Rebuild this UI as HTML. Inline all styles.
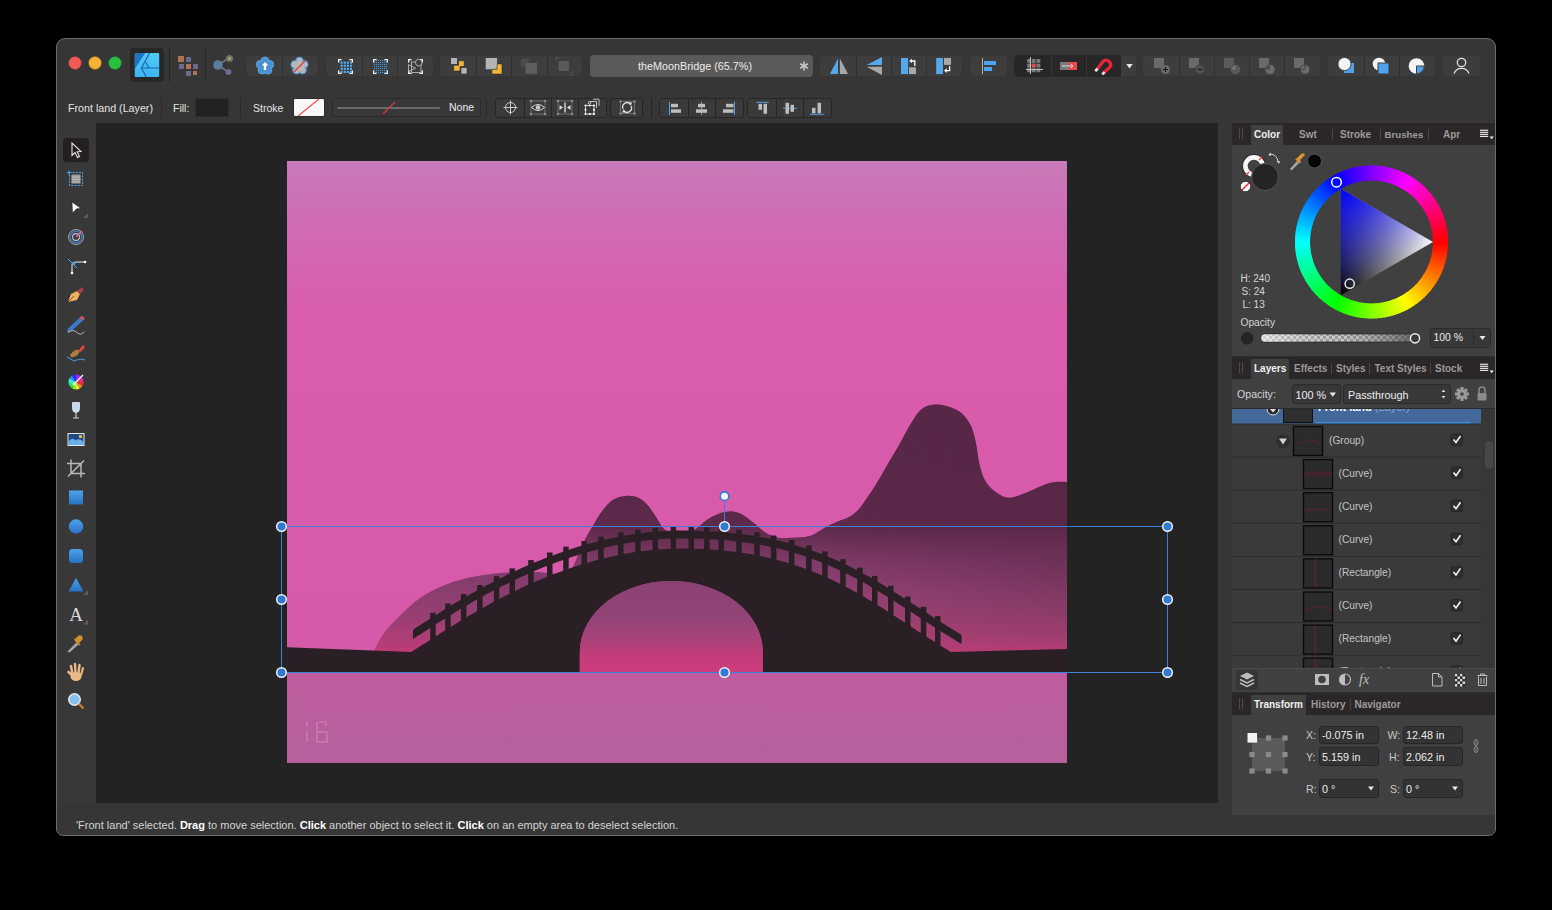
<!DOCTYPE html><html><head><meta charset="utf-8"><style>
*{margin:0;padding:0;box-sizing:border-box}
html,body{width:1552px;height:910px;overflow:hidden;background:#000;font-family:"Liberation Sans",sans-serif;position:relative}
.a{position:absolute}
svg.a{overflow:visible}
.t{position:absolute;white-space:nowrap}
</style></head><body><div class="a" style="left:56px;top:38px;width:1440px;height:798px;background:#363636;border:1px solid #6c6c6c;border-radius:9px 9px 7px 7px"></div><div class="a" style="left:57px;top:120px;width:39px;height:683px;background:#383838;"></div><div class="a" style="left:96px;top:123px;width:1122px;height:680px;background:#232323;"></div><div class="a" style="left:1232px;top:123px;width:263px;height:692px;background:#3f3f3f;"></div><div class="a" style="left:130px;top:48px;width:34px;height:34px;background:#272727;border-radius:4px"></div><svg class="a" style="left:130px;top:48px;" width="34" height="34" viewBox="130 48 34 34"><defs><linearGradient id="lg1" x1="0" y1="0" x2="0" y2="1"><stop offset="0" stop-color="#52c9f6"/><stop offset="1" stop-color="#3cb6f0"/></linearGradient></defs>
<rect x="134.8" y="52.9" width="24.4" height="24.2" rx="1.2" fill="url(#lg1)"/>
<path d="M134.8 54 Q134.8 52.9 136 52.9 L145.2 52.9 L134.8 68.9 Z" fill="#1f74c4"/>
<path d="M149.6 52.9 L141.4 68 L146.4 77.1 M141.4 68 H159.2 M145.6 62 L148.9 68" stroke="#1a64b4" stroke-width="1.15" fill="none"/>
</svg><div class="a" style="left:169px;top:48px;width:1px;height:34px;background:#242424;"></div><div class="a" style="left:205px;top:48px;width:1px;height:34px;background:#242424;"></div><svg class="a" style="left:175px;top:52px;" width="25" height="28" viewBox="175 52 25 28"><rect x="178" y="56" width="6" height="6" fill="#b07550"/><rect x="186" y="57" width="5" height="5" fill="#6a6a8e"/>
<rect x="179" y="64" width="5" height="5" fill="#6a6a8e"/><rect x="186" y="64" width="5" height="5" fill="#b07550"/><rect x="193" y="64" width="5" height="5" fill="#6a6a8e"/>
<rect x="186" y="71" width="5" height="5" fill="#6a6a8e"/><rect x="193" y="71" width="4" height="4" fill="#b07550"/></svg><svg class="a" style="left:210px;top:52px;" width="26" height="28" viewBox="210 52 26 28"><line x1="218" y1="65" x2="229" y2="58" stroke="#8a8a8a" stroke-width="1.2"/><line x1="218" y1="65" x2="228" y2="72" stroke="#8a8a8a" stroke-width="1.2"/>
<circle cx="218" cy="65" r="4.8" fill="#5a7f9e"/><circle cx="229.5" cy="58.5" r="3.6" fill="#707070"/><circle cx="228.5" cy="72" r="3" fill="#6b6b99"/>
<circle cx="229.5" cy="58.5" r="1.6" fill="#9ab04a"/></svg><div class="a" style="left:245px;top:55px;width:74px;height:22px;background:#3d3d3d;border-radius:5px;box-shadow:inset 0 0 0 1px rgba(40,40,40,.35)"></div><div class="a" style="left:282px;top:55px;width:1px;height:22px;background:#303030;"></div><div class="a" style="left:325px;top:55px;width:109px;height:22px;background:#3d3d3d;border-radius:5px;box-shadow:inset 0 0 0 1px rgba(40,40,40,.35)"></div><div class="a" style="left:362px;top:55px;width:1px;height:22px;background:#303030;"></div><div class="a" style="left:397px;top:55px;width:1px;height:22px;background:#303030;"></div><div class="a" style="left:439px;top:55px;width:144px;height:22px;background:#3d3d3d;border-radius:5px;box-shadow:inset 0 0 0 1px rgba(40,40,40,.35)"></div><div class="a" style="left:476px;top:55px;width:1px;height:22px;background:#303030;"></div><div class="a" style="left:511px;top:55px;width:1px;height:22px;background:#303030;"></div><div class="a" style="left:547px;top:55px;width:1px;height:22px;background:#303030;"></div><div class="a" style="left:590px;top:55px;width:223px;height:22px;background:#5a5a5a;border-radius:4px"></div><div class="t" style="left:638px;top:60.86px;font-size:10.8px;line-height:10.8px;color:#ececec;font-weight:normal;">theMoonBridge (65.7%)</div><svg class="a" style="left:796px;top:58px;" width="16" height="16" viewBox="796 58 16 16"><g stroke="#c4c4c4" stroke-width="1.6"><line x1="804" y1="61.5" x2="804" y2="70.5"/><line x1="800.1" y1="63.75" x2="807.9" y2="68.25"/><line x1="800.1" y1="68.25" x2="807.9" y2="63.75"/></g></svg><div class="a" style="left:819px;top:55px;width:144px;height:22px;background:#3d3d3d;border-radius:5px;box-shadow:inset 0 0 0 1px rgba(40,40,40,.35)"></div><div class="a" style="left:856px;top:55px;width:1px;height:22px;background:#303030;"></div><div class="a" style="left:891px;top:55px;width:1px;height:22px;background:#303030;"></div><div class="a" style="left:926px;top:55px;width:1px;height:22px;background:#303030;"></div><div class="a" style="left:969px;top:55px;width:39px;height:22px;background:#3d3d3d;border-radius:5px;box-shadow:inset 0 0 0 1px rgba(40,40,40,.35)"></div><div class="a" style="left:1014px;top:55px;width:123px;height:22px;background:#3d3d3d;border-radius:5px;box-shadow:inset 0 0 0 1px rgba(40,40,40,.35)"></div><div class="a" style="left:1014px;top:55px;width:107px;height:22px;background:#272727;border-radius:5px 0 0 5px"></div><div class="a" style="left:1051px;top:55px;width:1px;height:22px;background:#363636;"></div><div class="a" style="left:1086px;top:55px;width:1px;height:22px;background:#363636;"></div><div class="a" style="left:1142px;top:55px;width:179px;height:22px;background:#3d3d3d;border-radius:5px;box-shadow:inset 0 0 0 1px rgba(40,40,40,.35)"></div><div class="a" style="left:1179px;top:55px;width:1px;height:22px;background:#303030;"></div><div class="a" style="left:1214px;top:55px;width:1px;height:22px;background:#303030;"></div><div class="a" style="left:1249px;top:55px;width:1px;height:22px;background:#303030;"></div><div class="a" style="left:1284px;top:55px;width:1px;height:22px;background:#303030;"></div><div class="a" style="left:1327px;top:55px;width:109px;height:22px;background:#3d3d3d;border-radius:5px;box-shadow:inset 0 0 0 1px rgba(40,40,40,.35)"></div><div class="a" style="left:1364px;top:55px;width:1px;height:22px;background:#303030;"></div><div class="a" style="left:1399px;top:55px;width:1px;height:22px;background:#303030;"></div><div class="a" style="left:1442px;top:55px;width:39px;height:22px;background:#3d3d3d;border-radius:5px;box-shadow:inset 0 0 0 1px rgba(40,40,40,.35)"></div><svg class="a" style="left:0px;top:0px;" width="1552" height="100" viewBox="0 0 1552 100"><circle cx="265.00" cy="61.05" r="3.96" fill="#4a90d0" stroke="#5aa5e8" stroke-width="1"/><circle cx="269.71" cy="64.47" r="3.96" fill="#4a90d0" stroke="#5aa5e8" stroke-width="1"/><circle cx="267.91" cy="70.00" r="3.96" fill="#4a90d0" stroke="#5aa5e8" stroke-width="1"/><circle cx="262.09" cy="70.00" r="3.96" fill="#4a90d0" stroke="#5aa5e8" stroke-width="1"/><circle cx="260.29" cy="64.47" r="3.96" fill="#4a90d0" stroke="#5aa5e8" stroke-width="1"/><circle cx="265" cy="66" r="5.3999999999999995" fill="#4a90d0"/><path d="M265 62 l-3.2 3.6 h2 v4.4 h2.4 v-4.4 h2 z" fill="#fff"/><circle cx="299.50" cy="61.05" r="3.96" fill="#b8b8b8" stroke="#3d8ad6" stroke-width="1"/><circle cx="304.21" cy="64.47" r="3.96" fill="#b8b8b8" stroke="#3d8ad6" stroke-width="1"/><circle cx="302.41" cy="70.00" r="3.96" fill="#b8b8b8" stroke="#3d8ad6" stroke-width="1"/><circle cx="296.59" cy="70.00" r="3.96" fill="#b8b8b8" stroke="#3d8ad6" stroke-width="1"/><circle cx="294.79" cy="64.47" r="3.96" fill="#b8b8b8" stroke="#3d8ad6" stroke-width="1"/><circle cx="299.5" cy="66" r="5.3999999999999995" fill="#b8b8b8"/><line x1="294" y1="72" x2="305" y2="61" stroke="#e83a3a" stroke-width="1.3"/><rect x="338.0" y="59.0" width="3.6" height="1.3" fill="#f0f0f0"/><rect x="338.0" y="59.0" width="1.3" height="3.6" fill="#f0f0f0"/><rect x="338.0" y="72.7" width="3.6" height="1.3" fill="#f0f0f0"/><rect x="338.0" y="70.4" width="1.3" height="3.6" fill="#f0f0f0"/><rect x="349.4" y="59.0" width="3.6" height="1.3" fill="#f0f0f0"/><rect x="351.7" y="59.0" width="1.3" height="3.6" fill="#f0f0f0"/><rect x="349.4" y="72.7" width="3.6" height="1.3" fill="#f0f0f0"/><rect x="351.7" y="70.4" width="1.3" height="3.6" fill="#f0f0f0"/><rect x="340.6" y="61.6" width="2.1" height="2.1" fill="#55b0f5"/><rect x="340.6" y="64.7" width="2.1" height="2.1" fill="#55b0f5"/><rect x="340.6" y="67.8" width="2.1" height="2.1" fill="#55b0f5"/><rect x="340.6" y="70.9" width="2.1" height="2.1" fill="#55b0f5"/><rect x="343.7" y="61.6" width="2.1" height="2.1" fill="#55b0f5"/><rect x="343.7" y="64.7" width="2.1" height="2.1" fill="#55b0f5"/><rect x="343.7" y="67.8" width="2.1" height="2.1" fill="#55b0f5"/><rect x="343.7" y="70.9" width="2.1" height="2.1" fill="#55b0f5"/><rect x="346.8" y="61.6" width="2.1" height="2.1" fill="#55b0f5"/><rect x="346.8" y="64.7" width="2.1" height="2.1" fill="#55b0f5"/><rect x="346.8" y="67.8" width="2.1" height="2.1" fill="#55b0f5"/><rect x="346.8" y="70.9" width="2.1" height="2.1" fill="#55b0f5"/><rect x="349.9" y="61.6" width="2.1" height="2.1" fill="#55b0f5"/><rect x="349.9" y="64.7" width="2.1" height="2.1" fill="#55b0f5"/><rect x="349.9" y="67.8" width="2.1" height="2.1" fill="#55b0f5"/><rect x="349.9" y="70.9" width="2.1" height="2.1" fill="#55b0f5"/><rect x="373.0" y="59.0" width="3.6" height="1.3" fill="#f0f0f0"/><rect x="373.0" y="59.0" width="1.3" height="3.6" fill="#f0f0f0"/><rect x="373.0" y="72.7" width="3.6" height="1.3" fill="#f0f0f0"/><rect x="373.0" y="70.4" width="1.3" height="3.6" fill="#f0f0f0"/><rect x="384.4" y="59.0" width="3.6" height="1.3" fill="#f0f0f0"/><rect x="386.7" y="59.0" width="1.3" height="3.6" fill="#f0f0f0"/><rect x="384.4" y="72.7" width="3.6" height="1.3" fill="#f0f0f0"/><rect x="386.7" y="70.4" width="1.3" height="3.6" fill="#f0f0f0"/><rect x="374" y="60" width="1.1" height="1.1" fill="#4a98dc"/><rect x="374" y="62" width="1.1" height="1.1" fill="#4a98dc"/><rect x="374" y="64" width="1.1" height="1.1" fill="#4a98dc"/><rect x="374" y="66" width="1.1" height="1.1" fill="#4a98dc"/><rect x="374" y="68" width="1.1" height="1.1" fill="#4a98dc"/><rect x="374" y="70" width="1.1" height="1.1" fill="#4a98dc"/><rect x="374" y="72" width="1.1" height="1.1" fill="#4a98dc"/><rect x="376" y="60" width="1.1" height="1.1" fill="#4a98dc"/><rect x="376" y="62" width="1.1" height="1.1" fill="#4a98dc"/><rect x="376" y="64" width="1.1" height="1.1" fill="#4a98dc"/><rect x="376" y="66" width="1.1" height="1.1" fill="#4a98dc"/><rect x="376" y="68" width="1.1" height="1.1" fill="#4a98dc"/><rect x="376" y="70" width="1.1" height="1.1" fill="#4a98dc"/><rect x="376" y="72" width="1.1" height="1.1" fill="#4a98dc"/><rect x="378" y="60" width="1.1" height="1.1" fill="#4a98dc"/><rect x="378" y="62" width="1.1" height="1.1" fill="#4a98dc"/><rect x="378" y="64" width="1.1" height="1.1" fill="#4a98dc"/><rect x="378" y="66" width="1.1" height="1.1" fill="#4a98dc"/><rect x="378" y="68" width="1.1" height="1.1" fill="#4a98dc"/><rect x="378" y="70" width="1.1" height="1.1" fill="#4a98dc"/><rect x="378" y="72" width="1.1" height="1.1" fill="#4a98dc"/><rect x="380" y="60" width="1.1" height="1.1" fill="#4a98dc"/><rect x="380" y="62" width="1.1" height="1.1" fill="#4a98dc"/><rect x="380" y="64" width="1.1" height="1.1" fill="#4a98dc"/><rect x="380" y="66" width="1.1" height="1.1" fill="#4a98dc"/><rect x="380" y="68" width="1.1" height="1.1" fill="#4a98dc"/><rect x="380" y="70" width="1.1" height="1.1" fill="#4a98dc"/><rect x="380" y="72" width="1.1" height="1.1" fill="#4a98dc"/><rect x="382" y="60" width="1.1" height="1.1" fill="#4a98dc"/><rect x="382" y="62" width="1.1" height="1.1" fill="#4a98dc"/><rect x="382" y="64" width="1.1" height="1.1" fill="#4a98dc"/><rect x="382" y="66" width="1.1" height="1.1" fill="#4a98dc"/><rect x="382" y="68" width="1.1" height="1.1" fill="#4a98dc"/><rect x="382" y="70" width="1.1" height="1.1" fill="#4a98dc"/><rect x="382" y="72" width="1.1" height="1.1" fill="#4a98dc"/><rect x="384" y="60" width="1.1" height="1.1" fill="#4a98dc"/><rect x="384" y="62" width="1.1" height="1.1" fill="#4a98dc"/><rect x="384" y="64" width="1.1" height="1.1" fill="#4a98dc"/><rect x="384" y="66" width="1.1" height="1.1" fill="#4a98dc"/><rect x="384" y="68" width="1.1" height="1.1" fill="#4a98dc"/><rect x="384" y="70" width="1.1" height="1.1" fill="#4a98dc"/><rect x="384" y="72" width="1.1" height="1.1" fill="#4a98dc"/><rect x="386" y="60" width="1.1" height="1.1" fill="#4a98dc"/><rect x="386" y="62" width="1.1" height="1.1" fill="#4a98dc"/><rect x="386" y="64" width="1.1" height="1.1" fill="#4a98dc"/><rect x="386" y="66" width="1.1" height="1.1" fill="#4a98dc"/><rect x="386" y="68" width="1.1" height="1.1" fill="#4a98dc"/><rect x="386" y="70" width="1.1" height="1.1" fill="#4a98dc"/><rect x="386" y="72" width="1.1" height="1.1" fill="#4a98dc"/><rect x="408.0" y="59.0" width="3.6" height="1.3" fill="#f0f0f0"/><rect x="408.0" y="59.0" width="1.3" height="3.6" fill="#f0f0f0"/><rect x="408.0" y="72.7" width="3.6" height="1.3" fill="#f0f0f0"/><rect x="408.0" y="70.4" width="1.3" height="3.6" fill="#f0f0f0"/><rect x="419.4" y="59.0" width="3.6" height="1.3" fill="#f0f0f0"/><rect x="421.7" y="59.0" width="1.3" height="3.6" fill="#f0f0f0"/><rect x="419.4" y="72.7" width="3.6" height="1.3" fill="#f0f0f0"/><rect x="421.7" y="70.4" width="1.3" height="3.6" fill="#f0f0f0"/><rect x="411.5" y="62" width="9.5" height="10.5" fill="none" stroke="#b8b8b8" stroke-width=".9"/><circle cx="418.7" cy="62.6" r="3.3" fill="#3d3d3d" stroke="#b8b8b8" stroke-width=".9"/><path d="M408.5 64.5 v7 M408.5 64.6 L415.6 68.2 L408.5 71.6" fill="none" stroke="#b8b8b8" stroke-width=".9"/><rect x="451" y="58" width="6" height="6" fill="#b4b4b4"/><path d="M458.5 60.8 h5.7 v5.8 h-4.2 v4.4 h-6.3 v-5.7 h4.8z" fill="#f2b43a" stroke="#2a2a2a" stroke-width=".6"/><rect x="461" y="67.7" width="6" height="6.3" fill="#b4b4b4" stroke="#2a2a2a" stroke-width=".5"/><rect x="485.7" y="58" width="11.4" height="11.3" fill="#b4b4b4"/><path d="M497.1 63.9 h4.9 v10.2 h-10.1 v-4.8 h5.2z" fill="#f2b43a" stroke="#2a2a2a" stroke-width=".6"/><rect x="521" y="58.7" width="8.5" height="8" fill="#4a4a4a"/><rect x="525.7" y="63" width="11.4" height="10.9" fill="#5e5e5e"/><path d="M556 61 v-3 h3" stroke="#4e4e4e" stroke-width="1.5" fill="none"/><rect x="558.6" y="61" width="10.5" height="10" fill="#5a5a5a"/><path d="M572 72 v3 h-3" stroke="#4e4e4e" stroke-width="1.5" fill="none"/><path d="M838 58.5 v15.4 h-8.1 z" fill="#55a8ec"/><path d="M839.9 58.5 v15.4 h8.1 z" fill="#a8a8a8"/><path d="M882 57 v8 h-15.4 z" fill="#55a8ec"/><path d="M866.6 66.8 h15.4 v8.1 z" fill="#a8a8a8"/><rect x="901" y="58" width="7.1" height="16.1" fill="#55a8ec"/><rect x="909" y="67.3" width="7" height="6.8" fill="#a8a8a8"/><path d="M914.8 66 v-5 h-3.8" stroke="#fff" stroke-width="1.3" fill="none"/><path d="M909.3 61 l2.6 -2.3 v4.6z" fill="#fff"/><rect x="936.2" y="58" width="6.8" height="16.1" fill="#55a8ec"/><rect x="944" y="58" width="7" height="6.9" fill="#a8a8a8"/><path d="M949.6 66.3 v4.3 h-3.8" stroke="#fff" stroke-width="1.3" fill="none"/><path d="M944.1 70.6 l2.6 -2.3 v4.6z" fill="#fff"/><line x1="982.5" y1="58" x2="982.5" y2="74" stroke="#b0b0b0" stroke-width="1"/><rect x="984" y="61" width="12" height="4" fill="#4da3ee"/><rect x="984" y="67" width="8" height="4" fill="#4da3ee"/><rect x="1027.1" y="59.0" width="3.8" height="3.8" fill="#7a7a7a"/><rect x="1027.1" y="63.7" width="3.8" height="3.8" fill="#7a7a7a"/><rect x="1027.1" y="68.4" width="3.8" height="3.8" fill="#7a7a7a"/><rect x="1031.8" y="59.0" width="3.8" height="3.8" fill="#7a7a7a"/><rect x="1031.8" y="63.7" width="3.8" height="3.8" fill="#7a7a7a"/><rect x="1031.8" y="68.4" width="3.8" height="3.8" fill="#7a7a7a"/><rect x="1036.5" y="59.0" width="3.8" height="3.8" fill="#7a7a7a"/><rect x="1036.5" y="63.7" width="3.8" height="3.8" fill="#7a7a7a"/><rect x="1036.5" y="68.4" width="3.8" height="3.8" fill="#7a7a7a"/><rect x="1031.8" y="63.7" width="3.8" height="3.8" fill="#f04848"/><line x1="1030.5" y1="57" x2="1030.5" y2="74" stroke="#d0d0d0" stroke-width=".9"/><line x1="1026" y1="69.5" x2="1043" y2="69.5" stroke="#d0d0d0" stroke-width=".9"/><rect x="1060" y="62" width="9" height="8" fill="#7a7a7a"/><rect x="1069" y="62" width="8" height="8" fill="#f04848"/><path d="M1062 66 h11 l-2 -2 M1073 66 l-2 2" stroke="#ddd" stroke-width="1" fill="none"/><path d="M1096.5 70 L1103 61.5 A4.5 4.5 0 0 1 1110 67 L1103.5 73" stroke="#e8243a" stroke-width="3.3" fill="none"/><path d="M1095.5 69 l1.8 1.8" stroke="#eee" stroke-width="3.3"/><path d="M1102.5 72.3 l1.8 1.8" stroke="#eee" stroke-width="3.3"/><path d="M1126.3 64 h6.4 l-3.2 4.6 z" fill="#e8e8e8"/><rect x="1154" y="58" width="10" height="10" fill="#6a6a6a"/><circle cx="1165.5" cy="69.5" r="4.5" fill="#6a6a6a"/><path d="M1163 69.5 h5 M1165.5 67 v5" stroke="#111" stroke-width="1.1"/><rect x="1189" y="58" width="10" height="10" fill="#6a6a6a"/><circle cx="1200" cy="69.5" r="4.6" fill="#525252" stroke="#3d3d3d" stroke-width="1"/><path d="M1197.5 69.5 h5" stroke="#111" stroke-width="1.1"/><rect x="1224" y="58" width="10" height="10" fill="#5a5a5a"/><circle cx="1235.5" cy="69.5" r="4.8" fill="#585858"/><path d="M1230.7 69.5 h4.8 v-4.8" fill="#777"/><rect x="1259" y="58" width="10" height="10" fill="#6a6a6a"/><circle cx="1270" cy="69.5" r="4.8" fill="#6a6a6a"/><path d="M1265.2 69.5 a4.8 4.8 0 0 1 4.8 -4.8 v4.8z" fill="#4a4a4a"/><rect x="1294" y="58" width="10" height="10" fill="#6a6a6a"/><circle cx="1305" cy="69.5" r="4.8" fill="#6a6a6a" stroke="#3d3d3d" stroke-width=".8"/><path d="M1300.2 69.5 h4.8 v-4.8" stroke="#3d3d3d" stroke-width=".8" fill="none"/><rect x="1344" y="63" width="10" height="10" fill="#4da3ee"/><circle cx="1344.5" cy="64" r="6.6" fill="#f4f4f4" stroke="#3d3d3d" stroke-width="1"/><circle cx="1379" cy="64" r="6.3" fill="#f4f4f4"/><rect x="1378" y="63" width="11" height="11" fill="#4da3ee" stroke="#3d3d3d" stroke-width="1"/><circle cx="1416.5" cy="66" r="7.8" fill="#f4f4f4"/><path d="M1416.5 66 h7.8 a7.8 7.8 0 0 1 -7.8 7.8z" fill="#4da3ee" stroke="#3d3d3d" stroke-width="1"/><circle cx="1461.5" cy="62.5" r="4.2" fill="none" stroke="#e0e0e0" stroke-width="1.3"/><path d="M1454 73.5 a8 8 0 0 1 15 0" fill="none" stroke="#e0e0e0" stroke-width="1.3"/></svg><svg class="a" style="left:60px;top:50px;" width="70" height="30" viewBox="60 50 70 30"><circle cx="75" cy="63" r="6.2" fill="#f25a55" stroke="#d8443f" stroke-width=".6"/><circle cx="95" cy="63" r="6.2" fill="#f4b234" stroke="#d89a2a" stroke-width=".6"/><circle cx="115" cy="63" r="6.2" fill="#27c140" stroke="#20a838" stroke-width=".6"/></svg><div class="t" style="left:68px;top:102.94px;font-size:10.7px;line-height:10.7px;color:#e4e4e4;font-weight:normal;">Front land (Layer)</div><div class="a" style="left:161px;top:98px;width:1px;height:20px;background:#2a2a2a;"></div><div class="t" style="left:173px;top:103.11px;font-size:10.5px;line-height:10.5px;color:#e4e4e4;font-weight:normal;">Fill:</div><div class="a" style="left:195px;top:98px;width:34px;height:19px;background:#222222;border:1px solid #2c2c2c;border-radius:2px"></div><div class="a" style="left:240px;top:98px;width:1px;height:20px;background:#2a2a2a;"></div><div class="t" style="left:253px;top:103.11px;font-size:10.5px;line-height:10.5px;color:#e4e4e4;font-weight:normal;">Stroke</div><div class="a" style="left:293px;top:98px;width:32px;height:19px;background:#f8f8f8;border:1px solid #2a2a2a;border-radius:2px"></div><svg class="a" style="left:293px;top:98px;" width="32" height="19" viewBox="293 98 32 19"><line x1="298" y1="116" x2="319" y2="99" stroke="#ef5050" stroke-width="1.2"/></svg><div class="a" style="left:332px;top:98px;width:149px;height:19px;background:#383838;border:1px solid #2a2a2a;border-radius:3px"></div><div class="a" style="left:337px;top:107px;width:103px;height:2px;background:#6a6a6a;border-radius:1px"></div><svg class="a" style="left:330px;top:96px;" width="152" height="24" viewBox="330 96 152 24"><line x1="383" y1="114" x2="395" y2="102" stroke="#d83a3a" stroke-width="1.3"/></svg><div class="t" style="left:449px;top:102.11px;font-size:10.5px;line-height:10.5px;color:#ececec;font-weight:normal;">None</div><div class="a" style="left:486px;top:98px;width:1px;height:20px;background:#2a2a2a;"></div><div class="a" style="left:495px;top:98px;width:112px;height:20px;background:#3a3a3a;border:1px solid #262626;border-radius:3px"></div><div class="a" style="left:524px;top:99px;width:1px;height:18px;background:#262626;"></div><div class="a" style="left:551px;top:99px;width:1px;height:18px;background:#262626;"></div><div class="a" style="left:578px;top:99px;width:1px;height:18px;background:#262626;"></div><div class="a" style="left:610px;top:98px;width:33px;height:20px;background:#3a3a3a;border:1px solid #262626;border-radius:3px"></div><div class="a" style="left:651px;top:98px;width:1px;height:20px;background:#262626;"></div><div class="a" style="left:659px;top:98px;width:85px;height:20px;background:#3a3a3a;border:1px solid #262626;border-radius:3px"></div><div class="a" style="left:688px;top:99px;width:1px;height:18px;background:#262626;"></div><div class="a" style="left:715px;top:99px;width:1px;height:18px;background:#262626;"></div><div class="a" style="left:747px;top:98px;width:85px;height:20px;background:#3a3a3a;border:1px solid #262626;border-radius:3px"></div><div class="a" style="left:776px;top:99px;width:1px;height:18px;background:#262626;"></div><div class="a" style="left:803px;top:99px;width:1px;height:18px;background:#262626;"></div><svg class="a" style="left:480px;top:90px;" width="360" height="35" viewBox="480 90 360 35"><circle cx="510.5" cy="107.5" r="5" fill="none" stroke="#d8d8d8" stroke-width=".9"/><path d="M503.5 107.5 h14 M510.5 100.5 v14" stroke="#d8d8d8" stroke-width=".9"/><rect x="531" y="101" width="14" height="13" fill="none" stroke="#7a7a7a" stroke-width=".8"/><circle cx="531" cy="101" r="1.3" fill="#8a8a8a"/><circle cx="531" cy="114" r="1.3" fill="#8a8a8a"/><circle cx="545" cy="101" r="1.3" fill="#8a8a8a"/><circle cx="545" cy="114" r="1.3" fill="#8a8a8a"/><path d="M531.5 107.5 q6.5 -6 13 0 q-6.5 6 -13 0z" fill="none" stroke="#e0e0e0" stroke-width="1"/><circle cx="538" cy="107.5" r="2.3" fill="#c8c8c8"/><rect x="558" y="101" width="14" height="13" fill="none" stroke="#7a7a7a" stroke-width=".8"/><circle cx="558" cy="101" r="1.3" fill="#8a8a8a"/><circle cx="558" cy="114" r="1.3" fill="#8a8a8a"/><circle cx="572" cy="101" r="1.3" fill="#8a8a8a"/><circle cx="572" cy="114" r="1.3" fill="#8a8a8a"/><path d="M565 102.5 v10" stroke="#a8a8a8" stroke-width="2.2"/><path d="M559.5 105 l3.5 2.5 l-3.5 2.5z M570.5 105 l-3.5 2.5 l3.5 2.5z" fill="#e0e0e0"/><path d="M590 101.5 h6.5 v6.5 M593 99.2 h6 v6.5" fill="none" stroke="#cfcfcf" stroke-width=".9"/><rect x="585.5" y="105.5" width="8.5" height="8.5" fill="none" stroke="#f0f0f0" stroke-width=".8"/><circle cx="585.5" cy="105.5" r="1.05" fill="#fff"/><circle cx="585.5" cy="109.75" r="1.05" fill="#fff"/><circle cx="585.5" cy="114" r="1.05" fill="#fff"/><circle cx="589.75" cy="105.5" r="1.05" fill="#fff"/><circle cx="589.75" cy="114" r="1.05" fill="#fff"/><circle cx="594" cy="105.5" r="1.05" fill="#fff"/><circle cx="594" cy="109.75" r="1.05" fill="#fff"/><circle cx="594" cy="114" r="1.05" fill="#fff"/><circle cx="589.5" cy="102.8" r="1.3" fill="#3a3a3a" stroke="#fff" stroke-width=".7"/><rect x="620.5" y="101.5" width="14.0" height="12.0" fill="none" stroke="#7a7a7a" stroke-width=".8"/><circle cx="620.5" cy="101.5" r="1.3" fill="#8a8a8a"/><circle cx="620.5" cy="113.5" r="1.3" fill="#8a8a8a"/><circle cx="634.5" cy="101.5" r="1.3" fill="#8a8a8a"/><circle cx="634.5" cy="113.5" r="1.3" fill="#8a8a8a"/><path d="M623.2 109 A4.3 4.3 0 0 1 630.5 104.5" fill="none" stroke="#dcdcdc" stroke-width="1.3"/><path d="M631 106 A4.3 4.3 0 0 1 623.7 110.5" fill="none" stroke="#dcdcdc" stroke-width="1.3"/><path d="M628.5 102.6 l3.6 -0.2 l-1.2 3.4z M625.8 112.4 l-3.6 0.2 l1.2 -3.4z" fill="#dcdcdc"/><g transform="translate(0,0.8)"><line x1="669.5" y1="101" x2="669.5" y2="114" stroke="#4da3ee" stroke-width="1"/><rect x="671" y="103" width="7" height="3.5" fill="#bdbdbd"/><rect x="671" y="108.5" width="10" height="3.5" fill="#bdbdbd"/><line x1="701.5" y1="101" x2="701.5" y2="114" stroke="#4da3ee" stroke-width="1"/><rect x="698" y="103" width="7" height="3.5" fill="#bdbdbd"/><rect x="696" y="108.5" width="11" height="3.5" fill="#bdbdbd"/><line x1="734.5" y1="101" x2="734.5" y2="114" stroke="#4da3ee" stroke-width="1"/><rect x="726" y="103" width="7.5" height="3.5" fill="#bdbdbd"/><rect x="723" y="108.5" width="10.5" height="3.5" fill="#bdbdbd"/><line x1="756" y1="101.5" x2="769" y2="101.5" stroke="#4da3ee" stroke-width="1"/><rect x="758.5" y="103" width="3.5" height="6" fill="#bdbdbd"/><rect x="763.5" y="103" width="3.5" height="10" fill="#bdbdbd"/><line x1="783" y1="107.5" x2="797" y2="107.5" stroke="#4da3ee" stroke-width="1"/><rect x="785.5" y="102" width="3.5" height="11" fill="#bdbdbd"/><rect x="790.5" y="104" width="3.5" height="7" fill="#bdbdbd"/><line x1="810" y1="113.5" x2="824" y2="113.5" stroke="#4da3ee" stroke-width="1"/><rect x="812" y="107" width="3.5" height="5.5" fill="#bdbdbd"/><rect x="817.5" y="102" width="3.5" height="10.5" fill="#bdbdbd"/></g></svg><div class="a" style="left:63px;top:138px;width:26px;height:24px;background:#241f21;border-radius:4px"></div><svg class="a" style="left:56px;top:120px;" width="40" height="600" viewBox="56 120 40 600"><path d="M72 143 L72 155.5 L75 152.5 L77.5 157.5 L79.5 156.5 L77.2 151.8 L81 151.6 Z" fill="#1e1a1c" stroke="#e6e6e6" stroke-width="1.1"/><path d="M67 172.5 h4 M69 170.5 v4" stroke="#4da3ee" stroke-width="1"/><rect x="69.5" y="172.5" width="13" height="13" fill="none" stroke="#4da3ee" stroke-width="1" stroke-dasharray="2 1.2"/><rect x="71.5" y="174.5" width="9" height="9" fill="#9a9a9a"/><line x1="71.5" y1="177.0" x2="80.5" y2="177.0" stroke="#cfcfcf" stroke-width=".6"/><line x1="71.5" y1="179.5" x2="80.5" y2="179.5" stroke="#cfcfcf" stroke-width=".6"/><line x1="71.5" y1="182.0" x2="80.5" y2="182.0" stroke="#cfcfcf" stroke-width=".6"/><path d="M72 202 L81 208.5 L76.5 208.8 L72.5 213 Z" fill="#ffffff" stroke="#111" stroke-width=".5"/><path d="M88 213 v5 h-5z" fill="#5a5a5a"/><circle cx="76" cy="237" r="7.5" fill="#3a3a3a" stroke="#a8a8a8" stroke-width="1"/><circle cx="76" cy="237" r="5.8" fill="none" stroke="#3a78c8" stroke-width="1.4"/><circle cx="76" cy="237" r="3.4" fill="none" stroke="#c8c8c8" stroke-width="1.1"/><line x1="76" y1="237" x2="82" y2="231" stroke="#e060b0" stroke-width="1.5"/><path d="M72 273 V265 Q72 262 77 262 H85" fill="none" stroke="#f0f0f0" stroke-width="1"/><line x1="68" y1="259" x2="77" y2="268" stroke="#4da3ee" stroke-width="1"/><circle cx="73.5" cy="263.5" r="1.8" fill="#4da3ee"/><circle cx="72" cy="273" r="1.3" fill="#fff"/><circle cx="85" cy="262" r="1.3" fill="#fff"/><path d="M68 302 L71 294 L77 291 L80 294 L77 300 Z" fill="#f0b060"/><path d="M77 291 L82 287 L84 290 L80 294 Z" fill="#a04040"/><line x1="68" y1="302" x2="74" y2="296" stroke="#5a3a20" stroke-width=".8"/><path d="M68 328.5 L81 316.5 L84 319.5 L71 331.5 L67 332.5 Z" fill="#3a78c8"/><path d="M81 316.5 L84 319.5" stroke="#e05050" stroke-width="2.5"/><path d="M68 332.5 q5 -4 9 0 t7 -1" fill="none" stroke="#cfcfcf" stroke-width=".8"/><path d="M79 350 L83 345 L85 347 L81 352Z" fill="#e04848"/><path d="M70 355 Q76 347 80 351 Q77 358 71 357Z" fill="#b07a40"/><path d="M67 357 L74 361 Q80 358 85 360" fill="none" stroke="#4a90d0" stroke-width="1.1"/><path d="M76 382 L83.50 382.00 A7.5 7.5 0 0 1 82.50 385.75Z" fill="hsl(0,85%,55%)"/><path d="M76 382 L82.50 385.75 A7.5 7.5 0 0 1 79.75 388.50Z" fill="hsl(30,85%,55%)"/><path d="M76 382 L79.75 388.50 A7.5 7.5 0 0 1 76.00 389.50Z" fill="hsl(60,85%,55%)"/><path d="M76 382 L76.00 389.50 A7.5 7.5 0 0 1 72.25 388.50Z" fill="hsl(90,85%,55%)"/><path d="M76 382 L72.25 388.50 A7.5 7.5 0 0 1 69.50 385.75Z" fill="hsl(120,85%,55%)"/><path d="M76 382 L69.50 385.75 A7.5 7.5 0 0 1 68.50 382.00Z" fill="hsl(150,85%,55%)"/><path d="M76 382 L68.50 382.00 A7.5 7.5 0 0 1 69.50 378.25Z" fill="hsl(180,85%,55%)"/><path d="M76 382 L69.50 378.25 A7.5 7.5 0 0 1 72.25 375.50Z" fill="hsl(210,85%,55%)"/><path d="M76 382 L72.25 375.50 A7.5 7.5 0 0 1 76.00 374.50Z" fill="hsl(240,85%,55%)"/><path d="M76 382 L76.00 374.50 A7.5 7.5 0 0 1 79.75 375.50Z" fill="hsl(270,85%,55%)"/><path d="M76 382 L79.75 375.50 A7.5 7.5 0 0 1 82.50 378.25Z" fill="hsl(300,85%,55%)"/><path d="M76 382 L82.50 378.25 A7.5 7.5 0 0 1 83.50 382.00Z" fill="hsl(330,85%,55%)"/><line x1="74" y1="384" x2="83" y2="375" stroke="#fff" stroke-width="1.3"/><circle cx="74" cy="384" r="1.5" fill="#fff"/><path d="M72.5 402.5 h7 v6 q0 4 -3.5 4 q-3.5 0 -3.5 -4z" fill="#c8d8f0" stroke="#e8e8e8" stroke-width=".8"/><path d="M76 412.5 v5 M73 418.0 h6" stroke="#cfcfcf" stroke-width="1.2"/><rect x="67.5" y="433.0" width="17" height="13" fill="#e8e8e8"/><rect x="68.5" y="434.0" width="15" height="11" fill="#1e4a8a"/><path d="M68.5 441.5 q4 -5 7 -1 q3 -3 8 1 v3.5 h-15z" fill="#6ab0e8"/><rect x="79" y="435.0" width="3" height="3" fill="#f0b030"/><path d="M71 459.5 V473.5 H85 M67 463.5 H81 V477.5 M68 476.5 L84 460.5" fill="none" stroke="#b8b8b8" stroke-width="1.5"/><defs><linearGradient id="tg" x1="0" y1="0" x2="0" y2="1"><stop offset="0" stop-color="#4aa2ea"/><stop offset="1" stop-color="#2a72c4"/></linearGradient></defs><rect x="69" y="490.5" width="14" height="14" fill="url(#tg)"/><circle cx="76" cy="526.5" r="7.2" fill="url(#tg)"/><rect x="69" y="549" width="14" height="14" rx="3.5" fill="url(#tg)"/><path d="M76 578 L83.5 591.5 H68.5Z" fill="url(#tg)"/><path d="M88 590 v5 h-5z" fill="#5a5a5a"/><text x="76" y="621.0" text-anchor="middle" font-family="Liberation Serif" font-size="19" fill="#d8d8d8">A</text><path d="M88 619.5 v5 h-5z" fill="#5a5a5a"/><path d="M67.5 651.5 L76.5 642.5 L78.5 644.5 L69.5 652.5Z" fill="#a8a8a8"/><path d="M75 641 L79.5 645.5 L80.5 644.5 L79 643 L82.5 639.5 A3 3 0 0 0 78.5 635.5 L75 639 L73.5 637.5Z" fill="#d0902c"/><g stroke="#e8b888" stroke-linecap="round" fill="none"><path d="M68.5 672 L73 676" stroke-width="2.6"/><path d="M72.5 674 L71 666" stroke-width="2.4"/><path d="M75.5 673 L75 664" stroke-width="2.4"/><path d="M78.5 673 L79.5 665" stroke-width="2.4"/><path d="M81 675 L83 668" stroke-width="2.2"/></g><ellipse cx="76" cy="676.5" rx="5.5" ry="4.5" fill="#e8b888"/><circle cx="74.5" cy="699.5" r="5.8" fill="#8ac0f0" stroke="#e8e8e8" stroke-width="1.4"/><line x1="79" y1="704" x2="83.5" y2="708.5" stroke="#d07a30" stroke-width="2.4"/></svg><svg class="a" style="left:96px;top:123px;" width="1122" height="680" viewBox="96 123 1122 680"><defs>
<linearGradient id="sky" x1="0" y1="161" x2="0" y2="763" gradientUnits="userSpaceOnUse">
<stop offset="0" stop-color="#c87ab9"/><stop offset="0.1" stop-color="#d06cb4"/><stop offset="0.25" stop-color="#d95cad"/><stop offset="0.8" stop-color="#d75aaa"/>
<stop offset="0.85" stop-color="#bf5c9f"/><stop offset="1" stop-color="#b5609c"/></linearGradient>
<linearGradient id="mtn" x1="0" y1="405" x2="0" y2="660" gradientUnits="userSpaceOnUse">
<stop offset="0" stop-color="#552545"/><stop offset="0.47" stop-color="#5c2849"/><stop offset="0.6" stop-color="#6c3158"/><stop offset="0.76" stop-color="#823a65"/><stop offset="0.9" stop-color="#9e3e6e"/><stop offset="1" stop-color="#c23c76"/></linearGradient>
<linearGradient id="hill" x1="0" y1="570" x2="0" y2="655" gradientUnits="userSpaceOnUse">
<stop offset="0" stop-color="#7e3c6a"/><stop offset="0.5" stop-color="#953f72"/><stop offset="0.8" stop-color="#ad3e76"/><stop offset="1" stop-color="#c43a78"/></linearGradient>
<linearGradient id="arch" x1="0" y1="580" x2="0" y2="672" gradientUnits="userSpaceOnUse">
<stop offset="0" stop-color="#8a4272"/><stop offset="0.4" stop-color="#924476"/><stop offset="0.62" stop-color="#a6427a"/><stop offset="0.82" stop-color="#c23d7a"/><stop offset="1" stop-color="#cf3c7c"/></linearGradient>
<clipPath id="abclip"><rect x="287" y="161" width="780" height="602"/></clipPath>
</defs>
<g clip-path="url(#abclip)">
<rect x="287" y="161" width="780" height="602" fill="url(#sky)"/>
<path d="M373.0 653.0 C374.8 649.7 379.7 639.0 384.0 633.0 C388.3 627.0 392.4 622.9 398.7 616.9 C405.0 610.9 412.9 602.6 421.9 596.8 C430.9 591.0 442.5 585.7 452.8 582.1 C463.1 578.5 473.4 576.8 483.7 575.1 C494.0 573.4 504.3 572.4 514.6 572.0 C524.9 571.6 534.7 571.8 545.6 572.8 C556.5 573.8 574.3 577.1 580.0 578.0 L580 660 L373 660 Z" fill="url(#hill)"/><path d="M572.0 570.0 C574.1 565.2 580.8 548.8 584.4 541.3 C588.0 533.8 590.5 530.2 593.5 525.1 C596.5 520.0 599.2 514.9 602.5 510.7 C605.8 506.5 609.4 502.3 613.3 499.8 C617.2 497.3 621.7 496.2 625.9 495.9 C630.1 495.6 635.0 496.4 638.6 498.0 C642.2 499.6 644.6 502.0 647.6 505.3 C650.6 508.6 653.9 514.0 656.6 517.9 C659.3 521.8 660.7 526.0 663.8 528.7 C666.9 531.4 671.3 533.5 675.0 534.0 C678.7 534.5 682.5 532.9 686.0 532.0 C689.5 531.1 692.8 530.8 696.3 528.7 C699.8 526.7 703.2 522.2 707.1 519.7 C711.0 517.2 715.5 514.8 719.7 513.4 C723.9 512.0 728.5 511.3 732.4 511.6 C736.3 511.9 739.6 513.2 743.2 515.2 C746.8 517.2 750.4 520.4 754.0 523.3 C757.6 526.1 760.9 529.9 764.8 532.3 C768.7 534.7 773.0 536.8 777.5 537.7 C782.0 538.6 786.5 538.0 791.9 537.7 C797.3 537.4 804.3 537.7 810.0 535.9 C815.7 534.1 821.5 529.3 826.2 526.9 C830.9 524.5 834.0 523.2 838.0 521.5 C842.0 519.8 846.5 518.6 850.0 516.5 C853.5 514.4 856.2 512.1 859.0 509.0 C861.8 505.9 864.2 502.0 867.0 498.0 C869.8 494.0 872.2 490.7 875.7 485.0 C879.2 479.3 883.9 470.9 888.0 463.8 C892.1 456.8 896.5 449.4 900.3 442.7 C904.1 436.0 907.4 429.0 910.9 423.4 C914.4 417.8 917.9 412.4 921.4 409.3 C924.9 406.2 928.2 405.6 932.0 405.0 C935.8 404.4 939.6 404.3 944.3 405.5 C949.0 406.7 955.7 408.7 960.1 412.0 C964.5 415.3 968.1 420.1 970.7 425.2 C973.3 430.3 974.5 436.3 975.9 442.7 C977.3 449.1 977.9 457.6 979.4 463.8 C980.9 470.0 982.4 475.3 984.7 479.7 C987.1 484.1 989.7 487.2 993.5 490.2 C997.3 493.2 1002.6 497.0 1007.6 497.6 C1012.6 498.2 1017.0 496.0 1023.4 493.7 C1029.8 491.4 1040.4 486.0 1046.3 484.0 C1052.2 482.0 1054.6 482.1 1058.6 481.8 C1062.5 481.5 1068.1 482.2 1070.0 482.3 L1070 660 L572 660 Z" fill="url(#mtn)"/><defs><linearGradient id="mid" x1="0" y1="495" x2="0" y2="660" gradientUnits="userSpaceOnUse">
<stop offset="0" stop-color="#5a2848"/><stop offset="0.2" stop-color="#5e2a4b"/><stop offset="0.4" stop-color="#7e3a66"/><stop offset="0.6" stop-color="#954274"/><stop offset="0.85" stop-color="#a84176"/><stop offset="1" stop-color="#c43c78"/></linearGradient>
<linearGradient id="midm" x1="572" y1="0" x2="1070" y2="0" gradientUnits="userSpaceOnUse"><stop offset="0" stop-color="#fff"/><stop offset="0.5" stop-color="#fff"/><stop offset="0.85" stop-color="#fff" stop-opacity=".25"/><stop offset="1" stop-color="#fff" stop-opacity="0"/></linearGradient>
<mask id="midmask" maskUnits="userSpaceOnUse" x="560" y="400" width="520" height="270"><rect x="560" y="400" width="520" height="270" fill="url(#midm)"/></mask></defs><path d="M572.0 570.0 C574.1 565.2 580.8 548.8 584.4 541.3 C588.0 533.8 590.5 530.2 593.5 525.1 C596.5 520.0 599.2 514.9 602.5 510.7 C605.8 506.5 609.4 502.3 613.3 499.8 C617.2 497.3 621.7 496.2 625.9 495.9 C630.1 495.6 635.0 496.4 638.6 498.0 C642.2 499.6 644.6 502.0 647.6 505.3 C650.6 508.6 653.9 514.0 656.6 517.9 C659.3 521.8 660.7 526.0 663.8 528.7 C666.9 531.4 671.3 533.5 675.0 534.0 C678.7 534.5 682.5 532.9 686.0 532.0 C689.5 531.1 692.8 530.8 696.3 528.7 C699.8 526.7 703.2 522.2 707.1 519.7 C711.0 517.2 715.5 514.8 719.7 513.4 C723.9 512.0 728.5 511.3 732.4 511.6 C736.3 511.9 739.6 513.2 743.2 515.2 C746.8 517.2 750.4 520.4 754.0 523.3 C757.6 526.1 760.9 529.9 764.8 532.3 C768.7 534.7 773.0 536.8 777.5 537.7 C782.0 538.6 786.5 538.0 791.9 537.7 C797.3 537.4 804.3 537.7 810.0 535.9 C815.7 534.1 821.5 529.3 826.2 526.9 C830.9 524.5 834.0 523.2 838.0 521.5 C842.0 519.8 846.5 518.6 850.0 516.5 C853.5 514.4 856.2 512.1 859.0 509.0 C861.8 505.9 864.2 502.0 867.0 498.0 C869.8 494.0 872.2 490.7 875.7 485.0 C879.2 479.3 883.9 470.9 888.0 463.8 C892.1 456.8 896.5 449.4 900.3 442.7 C904.1 436.0 907.4 429.0 910.9 423.4 C914.4 417.8 917.9 412.4 921.4 409.3 C924.9 406.2 928.2 405.6 932.0 405.0 C935.8 404.4 939.6 404.3 944.3 405.5 C949.0 406.7 955.7 408.7 960.1 412.0 C964.5 415.3 968.1 420.1 970.7 425.2 C973.3 430.3 974.5 436.3 975.9 442.7 C977.3 449.1 977.9 457.6 979.4 463.8 C980.9 470.0 982.4 475.3 984.7 479.7 C987.1 484.1 989.7 487.2 993.5 490.2 C997.3 493.2 1002.6 497.0 1007.6 497.6 C1012.6 498.2 1017.0 496.0 1023.4 493.7 C1029.8 491.4 1040.4 486.0 1046.3 484.0 C1052.2 482.0 1054.6 482.1 1058.6 481.8 C1062.5 481.5 1068.1 482.2 1070.0 482.3 L1070 660 L572 660 Z" fill="url(#mid)" mask="url(#midmask)"/><path d="M280 647 L411 652 C440 636 552 548.6 681 548.6 C816 548.6 868 602 951 652 L1070 649 L1070 672 L763 672 L762.8 672 L762.8 652 A91.5 71 0 0 0 579.8 652 L579.8 672 L280 672 Z" fill="#2a1f25"/><path d="M579.8 672 V652 A91.5 71 0 0 1 762.8 652 V672Z" fill="url(#arch)"/><polygon points="413.0,630.2 414.1,629.0 415.9,627.8 417.7,626.6 419.7,625.4 421.7,624.1 423.7,622.8 425.9,621.4 428.1,620.0 430.4,618.5 432.8,617.0 435.2,615.4 437.7,613.9 440.3,612.3 442.9,610.6 445.6,608.9 448.3,607.3 451.2,605.5 454.0,603.8 457.0,602.0 460.0,600.3 463.1,598.5 466.2,596.7 469.4,594.8 472.6,593.0 475.9,591.2 479.2,589.3 482.6,587.5 486.1,585.6 489.6,583.8 493.2,581.9 496.8,580.0 500.5,578.2 504.2,576.4 507.9,574.5 511.8,572.7 515.6,570.9 519.5,569.1 523.5,567.3 527.5,565.6 531.5,563.8 535.6,562.1 539.8,560.4 544.0,558.7 548.2,557.1 552.5,555.5 556.8,553.9 561.1,552.4 565.5,550.9 569.9,549.4 574.4,548.0 578.9,546.6 583.5,545.2 588.0,543.9 592.6,542.7 597.3,541.5 602.0,540.3 606.7,539.2 611.4,538.2 616.2,537.2 621.0,536.3 625.9,535.4 630.8,534.6 635.7,533.9 640.6,533.2 645.6,532.6 650.6,532.1 655.6,531.6 660.6,531.3 665.7,531.0 670.8,530.8 675.9,530.6 681.0,530.6 681.0,530.6 686.2,530.6 691.3,530.7 696.4,530.8 701.4,531.0 706.3,531.2 711.2,531.4 715.9,531.6 720.7,532.0 725.3,532.3 729.9,532.7 734.5,533.2 738.9,533.7 743.3,534.2 747.7,534.8 752.0,535.5 756.3,536.2 760.4,536.9 764.6,537.6 768.7,538.5 772.7,539.3 776.7,540.2 780.6,541.1 784.5,542.1 788.4,543.1 792.1,544.2 795.9,545.2 799.6,546.4 803.3,547.5 806.9,548.7 810.4,549.9 814.0,551.2 817.5,552.5 820.9,553.8 824.4,555.1 827.7,556.5 831.1,557.9 834.4,559.3 837.7,560.8 840.9,562.3 844.2,563.8 847.3,565.3 850.5,566.8 853.6,568.4 856.8,570.0 859.8,571.6 862.9,573.2 865.9,574.9 868.9,576.6 871.9,578.3 874.9,580.0 877.8,581.7 880.7,583.5 883.6,585.2 886.5,587.0 889.4,588.8 892.3,590.6 895.1,592.4 898.0,594.2 900.8,596.0 903.7,597.9 906.5,599.7 909.3,601.5 912.2,603.4 915.0,605.2 917.8,607.1 920.7,608.9 923.5,610.8 926.3,612.6 929.2,614.5 932.0,616.3 934.9,618.2 937.8,620.0 940.7,621.9 943.6,623.8 946.5,625.6 949.4,627.4 952.4,629.3 955.4,631.1 958.4,633.0 961.4,634.8 961.6,634.9 961.6,644.0 957.3,641.5 954.3,639.6 951.3,637.8 948.3,635.9 945.3,634.1 942.3,632.2 939.4,630.3 936.5,628.5 933.6,626.6 930.7,624.7 927.8,622.9 924.9,621.0 922.1,619.2 919.2,617.3 916.4,615.4 913.6,613.6 910.7,611.7 907.9,609.9 905.1,608.1 902.3,606.2 899.4,604.4 896.6,602.6 893.8,600.8 891.0,599.0 888.1,597.2 885.3,595.4 882.4,593.7 879.6,591.9 876.7,590.2 873.8,588.4 870.9,586.7 868.0,585.0 865.1,583.3 862.1,581.7 859.1,580.1 856.1,578.5 853.1,576.9 850.0,575.3 847.0,573.8 843.9,572.3 840.7,570.8 837.6,569.3 834.4,567.9 831.2,566.4 828.0,565.0 824.7,563.7 821.4,562.3 818.0,561.0 814.7,559.7 811.2,558.5 807.8,557.3 804.3,556.1 800.8,554.9 797.2,553.8 793.6,552.7 789.9,551.6 786.2,550.6 782.5,549.6 778.7,548.7 774.8,547.8 771.0,546.9 767.0,546.1 763.0,545.3 759.0,544.5 754.9,543.8 750.7,543.2 746.5,542.5 742.2,542.0 737.9,541.4 733.5,540.9 729.1,540.5 724.6,540.1 720.0,539.7 715.4,539.4 710.7,539.2 705.9,539.0 701.1,538.8 696.2,538.6 691.2,538.5 686.1,538.4 681.0,538.4 681.0,538.4 676.0,538.4 671.0,538.6 666.1,538.8 661.1,539.1 656.2,539.4 651.3,539.9 646.4,540.4 641.6,540.9 636.8,541.6 632.0,542.3 627.2,543.1 622.5,543.9 617.8,544.8 613.1,545.8 608.4,546.8 603.8,547.9 599.2,549.0 594.6,550.2 590.1,551.4 585.6,552.7 581.2,554.0 576.7,555.4 572.4,556.8 568.0,558.2 563.7,559.7 559.4,561.2 555.2,562.8 551.0,564.4 546.8,566.0 542.7,567.6 538.6,569.3 534.6,571.0 530.6,572.7 526.7,574.4 522.8,576.2 518.9,578.0 515.1,579.8 511.3,581.6 507.6,583.4 503.9,585.2 500.3,587.0 496.8,588.8 493.2,590.7 489.8,592.5 486.3,594.3 483.0,596.2 479.7,598.0 476.4,599.8 473.2,601.6 470.1,603.4 467.0,605.2 463.9,607.0 461.0,608.7 458.1,610.5 455.2,612.2 452.4,613.9 449.7,615.6 447.0,617.2 444.4,618.9 441.8,620.5 439.4,622.0 437.0,623.6 434.6,625.1 432.3,626.5 430.1,627.9 428.0,629.3 425.9,630.7 423.9,631.9 422.0,633.2 420.1,634.4 418.3,635.5 416.6,636.6 415.0,637.7 413.5,638.6 413.0,639.2" fill="#2a1f25"/><rect x="430.2" y="612.8" width="5.5" height="28.4" fill="#2a1f25"/><rect x="445.2" y="603.5" width="5.5" height="28.2" fill="#2a1f25"/><rect x="460.9" y="594.1" width="5.5" height="27.9" fill="#2a1f25"/><rect x="477.1" y="585.0" width="5.5" height="27.6" fill="#2a1f25"/><rect x="493.8" y="576.2" width="5.5" height="27.3" fill="#2a1f25"/><rect x="509.5" y="568.4" width="5.5" height="27.0" fill="#2a1f25"/><rect x="528.2" y="560.1" width="5.5" height="26.6" fill="#2a1f25"/><rect x="547.0" y="552.5" width="5.5" height="26.3" fill="#2a1f25"/><rect x="563.2" y="546.7" width="5.5" height="26.0" fill="#2a1f25"/><rect x="581.5" y="541.0" width="5.5" height="25.8" fill="#2a1f25"/><rect x="598.2" y="536.6" width="5.5" height="25.5" fill="#2a1f25"/><rect x="618.0" y="532.3" width="5.5" height="25.3" fill="#2a1f25"/><rect x="635.2" y="529.6" width="5.5" height="25.2" fill="#2a1f25"/><rect x="652.6" y="527.7" width="5.5" height="25.1" fill="#2a1f25"/><rect x="670.6" y="526.7" width="5.5" height="25.0" fill="#2a1f25"/><rect x="688.5" y="526.7" width="5.5" height="25.0" fill="#2a1f25"/><rect x="704.1" y="527.2" width="5.5" height="25.1" fill="#2a1f25"/><rect x="718.5" y="528.0" width="5.5" height="25.3" fill="#2a1f25"/><rect x="736.2" y="529.7" width="5.5" height="25.6" fill="#2a1f25"/><rect x="754.2" y="532.3" width="5.5" height="26.0" fill="#2a1f25"/><rect x="770.9" y="535.5" width="5.5" height="26.4" fill="#2a1f25"/><rect x="788.9" y="540.0" width="5.5" height="27.0" fill="#2a1f25"/><rect x="806.1" y="545.4" width="5.5" height="27.6" fill="#2a1f25"/><rect x="822.2" y="551.4" width="5.5" height="28.3" fill="#2a1f25"/><rect x="840.2" y="559.2" width="5.5" height="29.1" fill="#2a1f25"/><rect x="857.2" y="567.7" width="5.5" height="29.9" fill="#2a1f25"/><rect x="872.0" y="575.9" width="5.5" height="30.5" fill="#2a1f25"/><rect x="888.0" y="585.7" width="5.5" height="30.8" fill="#2a1f25"/><rect x="905.0" y="596.5" width="5.5" height="31.0" fill="#2a1f25"/><rect x="920.8" y="606.8" width="5.5" height="31.0" fill="#2a1f25"/><rect x="935.0" y="616.1" width="5.5" height="30.8" fill="#2a1f25"/></g><g fill="none" stroke="#c989b4" stroke-width="2" opacity=".55"><path d="M307 722 v5 M307 731 v11"/><path d="M317 722 v20 h10 v-10 h-10 M319 722 h7 v4"/></g><rect x="281.5" y="526.5" width="886" height="146" fill="none" stroke="#3b80da" stroke-width="1"/><line x1="724.5" y1="496" x2="724.5" y2="526" stroke="#3b80da" stroke-width="1"/><circle cx="281.5" cy="526.5" r="4.8" fill="#2f7ad3" stroke="#f2f2f2" stroke-width="1.5"/><circle cx="724.5" cy="526.5" r="4.8" fill="#2f7ad3" stroke="#f2f2f2" stroke-width="1.5"/><circle cx="1167.5" cy="526.5" r="4.8" fill="#2f7ad3" stroke="#f2f2f2" stroke-width="1.5"/><circle cx="281.5" cy="599.5" r="4.8" fill="#2f7ad3" stroke="#f2f2f2" stroke-width="1.5"/><circle cx="1167.5" cy="599.5" r="4.8" fill="#2f7ad3" stroke="#f2f2f2" stroke-width="1.5"/><circle cx="281.5" cy="672.5" r="4.8" fill="#2f7ad3" stroke="#f2f2f2" stroke-width="1.5"/><circle cx="724.5" cy="672.5" r="4.8" fill="#2f7ad3" stroke="#f2f2f2" stroke-width="1.5"/><circle cx="1167.5" cy="672.5" r="4.8" fill="#2f7ad3" stroke="#f2f2f2" stroke-width="1.5"/><circle cx="724.5" cy="496.2" r="4.3" fill="#f2f2f2" stroke="#2f7ad3" stroke-width="1.6"/></svg><div class="a" style="left:1232px;top:123px;width:263px;height:22px;background:#2b2728;"></div><div class="a" style="left:1251px;top:125px;width:32px;height:20px;background:#404040;"></div><div class="a" style="left:1239px;top:128px;width:1px;height:11px;background:#4e4a4b;"></div><div class="a" style="left:1242px;top:128px;width:1px;height:11px;background:#4e4a4b;"></div><div class="t" style="left:1254px;top:129.53px;font-size:10px;line-height:10px;color:#f0f0f0;font-weight:bold;">Color</div><div class="t" style="left:1299px;top:129.53px;font-size:10px;line-height:10px;color:#9a9a9a;font-weight:bold;">Swt</div><div class="a" style="left:1332px;top:129px;width:1px;height:11px;background:#4a4647;"></div><div class="t" style="left:1340px;top:129.53px;font-size:10px;line-height:10px;color:#9a9a9a;font-weight:bold;">Stroke</div><div class="a" style="left:1380px;top:129px;width:1px;height:11px;background:#4a4647;"></div><div class="t" style="left:1384.5px;top:129.79px;font-size:9.7px;line-height:9.7px;color:#9a9a9a;font-weight:bold;">Brushes</div><div class="a" style="left:1428px;top:129px;width:1px;height:11px;background:#4a4647;"></div><div class="t" style="left:1443px;top:129.53px;font-size:10px;line-height:10px;color:#9a9a9a;font-weight:bold;">Apr</div><div class="a" style="left:1232px;top:145px;width:263px;height:211px;background:#404040;"></div><svg class="a" style="left:1232px;top:120px;" width="264" height="240" viewBox="1232 120 264 240"><rect x="1480" y="129.70" width="8.2" height="1.1" fill="#f0f0f0"/><rect x="1480" y="131.75" width="8.2" height="1.1" fill="#f0f0f0"/><rect x="1480" y="133.80" width="8.2" height="1.1" fill="#f0f0f0"/><rect x="1480" y="135.85" width="8.2" height="1.1" fill="#f0f0f0"/><path d="M1489.6 136.6 h4.2 l-2.1 2.6z" fill="#f0f0f0"/><circle cx="1254" cy="166" r="11.8" fill="none" stroke="#2e2e2e" stroke-width="1"/><circle cx="1254" cy="166" r="8.6" fill="none" stroke="#f6f6f6" stroke-width="4.6"/><line x1="1259" y1="160" x2="1262" y2="157" stroke="#f04040" stroke-width="1.5"/><line x1="1246" y1="175" x2="1249" y2="172" stroke="#f04040" stroke-width="1.5"/><circle cx="1265" cy="177" r="13.5" fill="#242424" stroke="#555" stroke-width="1"/><path d="M1270 154 a8 8 0 0 1 8 8" fill="none" stroke="#cfcfcf" stroke-width="1"/><path d="M1268 155 l3 -2.5 l0 3.5z M1279 164 l-2.5 -3 l3.5 0z" fill="#cfcfcf"/><circle cx="1245.5" cy="186.5" r="5.3" fill="#f6f6f6" stroke="#2a2a2a" stroke-width="1"/><line x1="1242" y1="190" x2="1249" y2="183" stroke="#e83030" stroke-width="1.4"/><path d="M1290 169 L1297 161 L1299 163 L1291.5 170.5Z" fill="#a8a8a8"/><path d="M1296 159 L1301 154 Q1304 152 1305 155 L1300 160 L1301 162 L1299.5 163.5 L1294.5 158.5Z" fill="#d8962c"/><circle cx="1314.5" cy="161" r="7" fill="#050505" stroke="#555" stroke-width="1"/><path d="M1448.00 241.20 L1447.92 245.47 L1432.94 244.79 L1433.00 241.36Z" fill="hsl(0,100%,50%)"/><path d="M1447.98 243.87 L1447.75 248.14 L1432.80 246.93 L1432.98 243.50Z" fill="hsl(2,100%,50%)"/><path d="M1447.87 246.54 L1447.49 250.79 L1432.59 249.07 L1432.89 245.65Z" fill="hsl(4,100%,50%)"/><path d="M1447.66 249.20 L1447.14 253.44 L1432.31 251.20 L1432.73 247.79Z" fill="hsl(6,100%,50%)"/><path d="M1447.36 251.85 L1446.69 256.07 L1431.95 253.31 L1432.49 249.92Z" fill="hsl(8,100%,50%)"/><path d="M1446.97 254.49 L1446.16 258.69 L1431.52 255.42 L1432.17 252.04Z" fill="hsl(10,100%,50%)"/><path d="M1446.49 257.12 L1445.53 261.28 L1431.01 257.50 L1431.79 254.16Z" fill="hsl(12,100%,50%)"/><path d="M1445.92 259.73 L1444.81 263.86 L1430.44 259.57 L1431.33 256.25Z" fill="hsl(14,100%,50%)"/><path d="M1445.25 262.32 L1444.00 266.40 L1429.79 261.62 L1430.79 258.33Z" fill="hsl(16,100%,50%)"/><path d="M1444.50 264.88 L1443.11 268.92 L1429.07 263.64 L1430.19 260.39Z" fill="hsl(18,100%,50%)"/><path d="M1443.66 267.41 L1442.13 271.40 L1428.28 265.63 L1429.51 262.43Z" fill="hsl(20,100%,50%)"/><path d="M1442.73 269.91 L1441.06 273.85 L1427.42 267.60 L1428.76 264.44Z" fill="hsl(22,100%,50%)"/><path d="M1441.71 272.38 L1439.90 276.25 L1426.49 269.54 L1427.94 266.42Z" fill="hsl(24,100%,50%)"/><path d="M1440.61 274.81 L1438.67 278.62 L1425.50 271.44 L1427.06 268.38Z" fill="hsl(26,100%,50%)"/><path d="M1439.42 277.21 L1437.35 280.94 L1424.44 273.31 L1426.10 270.30Z" fill="hsl(28,100%,50%)"/><path d="M1438.15 279.55 L1435.95 283.22 L1423.31 275.13 L1425.08 272.19Z" fill="hsl(30,100%,50%)"/><path d="M1436.80 281.86 L1434.47 285.44 L1422.12 276.92 L1423.99 274.04Z" fill="hsl(32,100%,50%)"/><path d="M1435.37 284.11 L1432.92 287.61 L1420.87 278.67 L1422.84 275.85Z" fill="hsl(34,100%,50%)"/><path d="M1433.86 286.32 L1431.29 289.73 L1419.56 280.37 L1421.63 277.63Z" fill="hsl(36,100%,50%)"/><path d="M1432.27 288.46 L1429.58 291.78 L1418.20 282.02 L1420.36 279.35Z" fill="hsl(38,100%,50%)"/><path d="M1430.61 290.56 L1427.81 293.78 L1416.77 283.63 L1419.02 281.04Z" fill="hsl(40,100%,50%)"/><path d="M1428.88 292.59 L1425.97 295.71 L1415.29 285.18 L1417.63 282.67Z" fill="hsl(42,100%,50%)"/><path d="M1427.08 294.56 L1424.06 297.58 L1413.76 286.68 L1416.18 284.26Z" fill="hsl(44,100%,50%)"/><path d="M1425.21 296.47 L1422.09 299.38 L1412.17 288.13 L1414.68 285.79Z" fill="hsl(46,100%,50%)"/><path d="M1423.28 298.31 L1420.06 301.11 L1410.54 289.52 L1413.13 287.27Z" fill="hsl(48,100%,50%)"/><path d="M1421.28 300.08 L1417.96 302.77 L1408.85 290.86 L1411.52 288.70Z" fill="hsl(50,100%,50%)"/><path d="M1419.23 301.79 L1415.82 304.36 L1407.13 292.13 L1409.87 290.06Z" fill="hsl(52,100%,50%)"/><path d="M1417.11 303.42 L1413.61 305.87 L1405.35 293.34 L1408.17 291.37Z" fill="hsl(54,100%,50%)"/><path d="M1414.94 304.97 L1411.36 307.30 L1403.54 294.49 L1406.42 292.62Z" fill="hsl(56,100%,50%)"/><path d="M1412.72 306.45 L1409.05 308.65 L1401.69 295.58 L1404.63 293.81Z" fill="hsl(58,100%,50%)"/><path d="M1410.44 307.85 L1406.71 309.92 L1399.80 296.60 L1402.81 294.94Z" fill="hsl(60,100%,50%)"/><path d="M1408.12 309.17 L1404.31 311.11 L1397.88 297.56 L1400.94 296.00Z" fill="hsl(62,100%,50%)"/><path d="M1405.75 310.40 L1401.88 312.21 L1395.92 298.44 L1399.04 296.99Z" fill="hsl(64,100%,50%)"/><path d="M1403.35 311.56 L1399.41 313.23 L1393.94 299.26 L1397.10 297.92Z" fill="hsl(66,100%,50%)"/><path d="M1400.90 312.63 L1396.91 314.16 L1391.93 300.01 L1395.13 298.78Z" fill="hsl(68,100%,50%)"/><path d="M1398.42 313.61 L1394.38 315.00 L1389.89 300.69 L1393.14 299.57Z" fill="hsl(70,100%,50%)"/><path d="M1395.90 314.50 L1391.82 315.75 L1387.83 301.29 L1391.12 300.29Z" fill="hsl(72,100%,50%)"/><path d="M1393.36 315.31 L1389.23 316.42 L1385.75 301.83 L1389.07 300.94Z" fill="hsl(74,100%,50%)"/><path d="M1390.78 316.03 L1386.62 316.99 L1383.66 302.29 L1387.00 301.51Z" fill="hsl(76,100%,50%)"/><path d="M1388.19 316.66 L1383.99 317.47 L1381.54 302.67 L1384.92 302.02Z" fill="hsl(78,100%,50%)"/><path d="M1385.57 317.19 L1381.35 317.86 L1379.42 302.99 L1382.81 302.45Z" fill="hsl(80,100%,50%)"/><path d="M1382.94 317.64 L1378.70 318.16 L1377.29 303.23 L1380.70 302.81Z" fill="hsl(82,100%,50%)"/><path d="M1380.29 317.99 L1376.04 318.37 L1375.15 303.39 L1378.57 303.09Z" fill="hsl(84,100%,50%)"/><path d="M1377.64 318.25 L1373.37 318.48 L1373.00 303.48 L1376.43 303.30Z" fill="hsl(86,100%,50%)"/><path d="M1374.97 318.42 L1370.70 318.50 L1370.86 303.50 L1374.29 303.44Z" fill="hsl(88,100%,50%)"/><path d="M1372.30 318.50 L1368.03 318.42 L1368.71 303.44 L1372.14 303.50Z" fill="hsl(90,100%,50%)"/><path d="M1369.63 318.48 L1365.36 318.25 L1366.57 303.30 L1370.00 303.48Z" fill="hsl(92,100%,50%)"/><path d="M1366.96 318.37 L1362.71 317.99 L1364.43 303.09 L1367.85 303.39Z" fill="hsl(94,100%,50%)"/><path d="M1364.30 318.16 L1360.06 317.64 L1362.30 302.81 L1365.71 303.23Z" fill="hsl(96,100%,50%)"/><path d="M1361.65 317.86 L1357.43 317.19 L1360.19 302.45 L1363.58 302.99Z" fill="hsl(98,100%,50%)"/><path d="M1359.01 317.47 L1354.81 316.66 L1358.08 302.02 L1361.46 302.67Z" fill="hsl(100,100%,50%)"/><path d="M1356.38 316.99 L1352.22 316.03 L1356.00 301.51 L1359.34 302.29Z" fill="hsl(102,100%,50%)"/><path d="M1353.77 316.42 L1349.64 315.31 L1353.93 300.94 L1357.25 301.83Z" fill="hsl(104,100%,50%)"/><path d="M1351.18 315.75 L1347.10 314.50 L1351.88 300.29 L1355.17 301.29Z" fill="hsl(106,100%,50%)"/><path d="M1348.62 315.00 L1344.58 313.61 L1349.86 299.57 L1353.11 300.69Z" fill="hsl(108,100%,50%)"/><path d="M1346.09 314.16 L1342.10 312.63 L1347.87 298.78 L1351.07 300.01Z" fill="hsl(110,100%,50%)"/><path d="M1343.59 313.23 L1339.65 311.56 L1345.90 297.92 L1349.06 299.26Z" fill="hsl(112,100%,50%)"/><path d="M1341.12 312.21 L1337.25 310.40 L1343.96 296.99 L1347.08 298.44Z" fill="hsl(114,100%,50%)"/><path d="M1338.69 311.11 L1334.88 309.17 L1342.06 296.00 L1345.12 297.56Z" fill="hsl(116,100%,50%)"/><path d="M1336.29 309.92 L1332.56 307.85 L1340.19 294.94 L1343.20 296.60Z" fill="hsl(118,100%,50%)"/><path d="M1333.95 308.65 L1330.28 306.45 L1338.37 293.81 L1341.31 295.58Z" fill="hsl(120,100%,50%)"/><path d="M1331.64 307.30 L1328.06 304.97 L1336.58 292.62 L1339.46 294.49Z" fill="hsl(122,100%,50%)"/><path d="M1329.39 305.87 L1325.89 303.42 L1334.83 291.37 L1337.65 293.34Z" fill="hsl(124,100%,50%)"/><path d="M1327.18 304.36 L1323.77 301.79 L1333.13 290.06 L1335.87 292.13Z" fill="hsl(126,100%,50%)"/><path d="M1325.04 302.77 L1321.72 300.08 L1331.48 288.70 L1334.15 290.86Z" fill="hsl(128,100%,50%)"/><path d="M1322.94 301.11 L1319.72 298.31 L1329.87 287.27 L1332.46 289.52Z" fill="hsl(130,100%,50%)"/><path d="M1320.91 299.38 L1317.79 296.47 L1328.32 285.79 L1330.83 288.13Z" fill="hsl(132,100%,50%)"/><path d="M1318.94 297.58 L1315.92 294.56 L1326.82 284.26 L1329.24 286.68Z" fill="hsl(134,100%,50%)"/><path d="M1317.03 295.71 L1314.12 292.59 L1325.37 282.67 L1327.71 285.18Z" fill="hsl(136,100%,50%)"/><path d="M1315.19 293.78 L1312.39 290.56 L1323.98 281.04 L1326.23 283.63Z" fill="hsl(138,100%,50%)"/><path d="M1313.42 291.78 L1310.73 288.46 L1322.64 279.35 L1324.80 282.02Z" fill="hsl(140,100%,50%)"/><path d="M1311.71 289.73 L1309.14 286.32 L1321.37 277.63 L1323.44 280.37Z" fill="hsl(142,100%,50%)"/><path d="M1310.08 287.61 L1307.63 284.11 L1320.16 275.85 L1322.13 278.67Z" fill="hsl(144,100%,50%)"/><path d="M1308.53 285.44 L1306.20 281.86 L1319.01 274.04 L1320.88 276.92Z" fill="hsl(146,100%,50%)"/><path d="M1307.05 283.22 L1304.85 279.55 L1317.92 272.19 L1319.69 275.13Z" fill="hsl(148,100%,50%)"/><path d="M1305.65 280.94 L1303.58 277.21 L1316.90 270.30 L1318.56 273.31Z" fill="hsl(150,100%,50%)"/><path d="M1304.33 278.62 L1302.39 274.81 L1315.94 268.38 L1317.50 271.44Z" fill="hsl(152,100%,50%)"/><path d="M1303.10 276.25 L1301.29 272.38 L1315.06 266.42 L1316.51 269.54Z" fill="hsl(154,100%,50%)"/><path d="M1301.94 273.85 L1300.27 269.91 L1314.24 264.44 L1315.58 267.60Z" fill="hsl(156,100%,50%)"/><path d="M1300.87 271.40 L1299.34 267.41 L1313.49 262.43 L1314.72 265.63Z" fill="hsl(158,100%,50%)"/><path d="M1299.89 268.92 L1298.50 264.88 L1312.81 260.39 L1313.93 263.64Z" fill="hsl(160,100%,50%)"/><path d="M1299.00 266.40 L1297.75 262.32 L1312.21 258.33 L1313.21 261.62Z" fill="hsl(162,100%,50%)"/><path d="M1298.19 263.86 L1297.08 259.73 L1311.67 256.25 L1312.56 259.57Z" fill="hsl(164,100%,50%)"/><path d="M1297.47 261.28 L1296.51 257.12 L1311.21 254.16 L1311.99 257.50Z" fill="hsl(166,100%,50%)"/><path d="M1296.84 258.69 L1296.03 254.49 L1310.83 252.04 L1311.48 255.42Z" fill="hsl(168,100%,50%)"/><path d="M1296.31 256.07 L1295.64 251.85 L1310.51 249.92 L1311.05 253.31Z" fill="hsl(170,100%,50%)"/><path d="M1295.86 253.44 L1295.34 249.20 L1310.27 247.79 L1310.69 251.20Z" fill="hsl(172,100%,50%)"/><path d="M1295.51 250.79 L1295.13 246.54 L1310.11 245.65 L1310.41 249.07Z" fill="hsl(174,100%,50%)"/><path d="M1295.25 248.14 L1295.02 243.87 L1310.02 243.50 L1310.20 246.93Z" fill="hsl(176,100%,50%)"/><path d="M1295.08 245.47 L1295.00 241.20 L1310.00 241.36 L1310.06 244.79Z" fill="hsl(178,100%,50%)"/><path d="M1295.00 242.80 L1295.08 238.53 L1310.06 239.21 L1310.00 242.64Z" fill="hsl(180,100%,50%)"/><path d="M1295.02 240.13 L1295.25 235.86 L1310.20 237.07 L1310.02 240.50Z" fill="hsl(182,100%,50%)"/><path d="M1295.13 237.46 L1295.51 233.21 L1310.41 234.93 L1310.11 238.35Z" fill="hsl(184,100%,50%)"/><path d="M1295.34 234.80 L1295.86 230.56 L1310.69 232.80 L1310.27 236.21Z" fill="hsl(186,100%,50%)"/><path d="M1295.64 232.15 L1296.31 227.93 L1311.05 230.69 L1310.51 234.08Z" fill="hsl(188,100%,50%)"/><path d="M1296.03 229.51 L1296.84 225.31 L1311.48 228.58 L1310.83 231.96Z" fill="hsl(190,100%,50%)"/><path d="M1296.51 226.88 L1297.47 222.72 L1311.99 226.50 L1311.21 229.84Z" fill="hsl(192,100%,50%)"/><path d="M1297.08 224.27 L1298.19 220.14 L1312.56 224.43 L1311.67 227.75Z" fill="hsl(194,100%,50%)"/><path d="M1297.75 221.68 L1299.00 217.60 L1313.21 222.38 L1312.21 225.67Z" fill="hsl(196,100%,50%)"/><path d="M1298.50 219.12 L1299.89 215.08 L1313.93 220.36 L1312.81 223.61Z" fill="hsl(198,100%,50%)"/><path d="M1299.34 216.59 L1300.87 212.60 L1314.72 218.37 L1313.49 221.57Z" fill="hsl(200,100%,50%)"/><path d="M1300.27 214.09 L1301.94 210.15 L1315.58 216.40 L1314.24 219.56Z" fill="hsl(202,100%,50%)"/><path d="M1301.29 211.62 L1303.10 207.75 L1316.51 214.46 L1315.06 217.58Z" fill="hsl(204,100%,50%)"/><path d="M1302.39 209.19 L1304.33 205.38 L1317.50 212.56 L1315.94 215.62Z" fill="hsl(206,100%,50%)"/><path d="M1303.58 206.79 L1305.65 203.06 L1318.56 210.69 L1316.90 213.70Z" fill="hsl(208,100%,50%)"/><path d="M1304.85 204.45 L1307.05 200.78 L1319.69 208.87 L1317.92 211.81Z" fill="hsl(210,100%,50%)"/><path d="M1306.20 202.14 L1308.53 198.56 L1320.88 207.08 L1319.01 209.96Z" fill="hsl(212,100%,50%)"/><path d="M1307.63 199.89 L1310.08 196.39 L1322.13 205.33 L1320.16 208.15Z" fill="hsl(214,100%,50%)"/><path d="M1309.14 197.68 L1311.71 194.27 L1323.44 203.63 L1321.37 206.37Z" fill="hsl(216,100%,50%)"/><path d="M1310.73 195.54 L1313.42 192.22 L1324.80 201.98 L1322.64 204.65Z" fill="hsl(218,100%,50%)"/><path d="M1312.39 193.44 L1315.19 190.22 L1326.23 200.37 L1323.98 202.96Z" fill="hsl(220,100%,50%)"/><path d="M1314.12 191.41 L1317.03 188.29 L1327.71 198.82 L1325.37 201.33Z" fill="hsl(222,100%,50%)"/><path d="M1315.92 189.44 L1318.94 186.42 L1329.24 197.32 L1326.82 199.74Z" fill="hsl(224,100%,50%)"/><path d="M1317.79 187.53 L1320.91 184.62 L1330.83 195.87 L1328.32 198.21Z" fill="hsl(226,100%,50%)"/><path d="M1319.72 185.69 L1322.94 182.89 L1332.46 194.48 L1329.87 196.73Z" fill="hsl(228,100%,50%)"/><path d="M1321.72 183.92 L1325.04 181.23 L1334.15 193.14 L1331.48 195.30Z" fill="hsl(230,100%,50%)"/><path d="M1323.77 182.21 L1327.18 179.64 L1335.87 191.87 L1333.13 193.94Z" fill="hsl(232,100%,50%)"/><path d="M1325.89 180.58 L1329.39 178.13 L1337.65 190.66 L1334.83 192.63Z" fill="hsl(234,100%,50%)"/><path d="M1328.06 179.03 L1331.64 176.70 L1339.46 189.51 L1336.58 191.38Z" fill="hsl(236,100%,50%)"/><path d="M1330.28 177.55 L1333.95 175.35 L1341.31 188.42 L1338.37 190.19Z" fill="hsl(238,100%,50%)"/><path d="M1332.56 176.15 L1336.29 174.08 L1343.20 187.40 L1340.19 189.06Z" fill="hsl(240,100%,50%)"/><path d="M1334.88 174.83 L1338.69 172.89 L1345.12 186.44 L1342.06 188.00Z" fill="hsl(242,100%,50%)"/><path d="M1337.25 173.60 L1341.12 171.79 L1347.08 185.56 L1343.96 187.01Z" fill="hsl(244,100%,50%)"/><path d="M1339.65 172.44 L1343.59 170.77 L1349.06 184.74 L1345.90 186.08Z" fill="hsl(246,100%,50%)"/><path d="M1342.10 171.37 L1346.09 169.84 L1351.07 183.99 L1347.87 185.22Z" fill="hsl(248,100%,50%)"/><path d="M1344.58 170.39 L1348.62 169.00 L1353.11 183.31 L1349.86 184.43Z" fill="hsl(250,100%,50%)"/><path d="M1347.10 169.50 L1351.18 168.25 L1355.17 182.71 L1351.88 183.71Z" fill="hsl(252,100%,50%)"/><path d="M1349.64 168.69 L1353.77 167.58 L1357.25 182.17 L1353.93 183.06Z" fill="hsl(254,100%,50%)"/><path d="M1352.22 167.97 L1356.38 167.01 L1359.34 181.71 L1356.00 182.49Z" fill="hsl(256,100%,50%)"/><path d="M1354.81 167.34 L1359.01 166.53 L1361.46 181.33 L1358.08 181.98Z" fill="hsl(258,100%,50%)"/><path d="M1357.43 166.81 L1361.65 166.14 L1363.58 181.01 L1360.19 181.55Z" fill="hsl(260,100%,50%)"/><path d="M1360.06 166.36 L1364.30 165.84 L1365.71 180.77 L1362.30 181.19Z" fill="hsl(262,100%,50%)"/><path d="M1362.71 166.01 L1366.96 165.63 L1367.85 180.61 L1364.43 180.91Z" fill="hsl(264,100%,50%)"/><path d="M1365.36 165.75 L1369.63 165.52 L1370.00 180.52 L1366.57 180.70Z" fill="hsl(266,100%,50%)"/><path d="M1368.03 165.58 L1372.30 165.50 L1372.14 180.50 L1368.71 180.56Z" fill="hsl(268,100%,50%)"/><path d="M1370.70 165.50 L1374.97 165.58 L1374.29 180.56 L1370.86 180.50Z" fill="hsl(270,100%,50%)"/><path d="M1373.37 165.52 L1377.64 165.75 L1376.43 180.70 L1373.00 180.52Z" fill="hsl(272,100%,50%)"/><path d="M1376.04 165.63 L1380.29 166.01 L1378.57 180.91 L1375.15 180.61Z" fill="hsl(274,100%,50%)"/><path d="M1378.70 165.84 L1382.94 166.36 L1380.70 181.19 L1377.29 180.77Z" fill="hsl(276,100%,50%)"/><path d="M1381.35 166.14 L1385.57 166.81 L1382.81 181.55 L1379.42 181.01Z" fill="hsl(278,100%,50%)"/><path d="M1383.99 166.53 L1388.19 167.34 L1384.92 181.98 L1381.54 181.33Z" fill="hsl(280,100%,50%)"/><path d="M1386.62 167.01 L1390.78 167.97 L1387.00 182.49 L1383.66 181.71Z" fill="hsl(282,100%,50%)"/><path d="M1389.23 167.58 L1393.36 168.69 L1389.07 183.06 L1385.75 182.17Z" fill="hsl(284,100%,50%)"/><path d="M1391.82 168.25 L1395.90 169.50 L1391.12 183.71 L1387.83 182.71Z" fill="hsl(286,100%,50%)"/><path d="M1394.38 169.00 L1398.42 170.39 L1393.14 184.43 L1389.89 183.31Z" fill="hsl(288,100%,50%)"/><path d="M1396.91 169.84 L1400.90 171.37 L1395.13 185.22 L1391.93 183.99Z" fill="hsl(290,100%,50%)"/><path d="M1399.41 170.77 L1403.35 172.44 L1397.10 186.08 L1393.94 184.74Z" fill="hsl(292,100%,50%)"/><path d="M1401.88 171.79 L1405.75 173.60 L1399.04 187.01 L1395.92 185.56Z" fill="hsl(294,100%,50%)"/><path d="M1404.31 172.89 L1408.12 174.83 L1400.94 188.00 L1397.88 186.44Z" fill="hsl(296,100%,50%)"/><path d="M1406.71 174.08 L1410.44 176.15 L1402.81 189.06 L1399.80 187.40Z" fill="hsl(298,100%,50%)"/><path d="M1409.05 175.35 L1412.72 177.55 L1404.63 190.19 L1401.69 188.42Z" fill="hsl(300,100%,50%)"/><path d="M1411.36 176.70 L1414.94 179.03 L1406.42 191.38 L1403.54 189.51Z" fill="hsl(302,100%,50%)"/><path d="M1413.61 178.13 L1417.11 180.58 L1408.17 192.63 L1405.35 190.66Z" fill="hsl(304,100%,50%)"/><path d="M1415.82 179.64 L1419.23 182.21 L1409.87 193.94 L1407.13 191.87Z" fill="hsl(306,100%,50%)"/><path d="M1417.96 181.23 L1421.28 183.92 L1411.52 195.30 L1408.85 193.14Z" fill="hsl(308,100%,50%)"/><path d="M1420.06 182.89 L1423.28 185.69 L1413.13 196.73 L1410.54 194.48Z" fill="hsl(310,100%,50%)"/><path d="M1422.09 184.62 L1425.21 187.53 L1414.68 198.21 L1412.17 195.87Z" fill="hsl(312,100%,50%)"/><path d="M1424.06 186.42 L1427.08 189.44 L1416.18 199.74 L1413.76 197.32Z" fill="hsl(314,100%,50%)"/><path d="M1425.97 188.29 L1428.88 191.41 L1417.63 201.33 L1415.29 198.82Z" fill="hsl(316,100%,50%)"/><path d="M1427.81 190.22 L1430.61 193.44 L1419.02 202.96 L1416.77 200.37Z" fill="hsl(318,100%,50%)"/><path d="M1429.58 192.22 L1432.27 195.54 L1420.36 204.65 L1418.20 201.98Z" fill="hsl(320,100%,50%)"/><path d="M1431.29 194.27 L1433.86 197.68 L1421.63 206.37 L1419.56 203.63Z" fill="hsl(322,100%,50%)"/><path d="M1432.92 196.39 L1435.37 199.89 L1422.84 208.15 L1420.87 205.33Z" fill="hsl(324,100%,50%)"/><path d="M1434.47 198.56 L1436.80 202.14 L1423.99 209.96 L1422.12 207.08Z" fill="hsl(326,100%,50%)"/><path d="M1435.95 200.78 L1438.15 204.45 L1425.08 211.81 L1423.31 208.87Z" fill="hsl(328,100%,50%)"/><path d="M1437.35 203.06 L1439.42 206.79 L1426.10 213.70 L1424.44 210.69Z" fill="hsl(330,100%,50%)"/><path d="M1438.67 205.38 L1440.61 209.19 L1427.06 215.62 L1425.50 212.56Z" fill="hsl(332,100%,50%)"/><path d="M1439.90 207.75 L1441.71 211.62 L1427.94 217.58 L1426.49 214.46Z" fill="hsl(334,100%,50%)"/><path d="M1441.06 210.15 L1442.73 214.09 L1428.76 219.56 L1427.42 216.40Z" fill="hsl(336,100%,50%)"/><path d="M1442.13 212.60 L1443.66 216.59 L1429.51 221.57 L1428.28 218.37Z" fill="hsl(338,100%,50%)"/><path d="M1443.11 215.08 L1444.50 219.12 L1430.19 223.61 L1429.07 220.36Z" fill="hsl(340,100%,50%)"/><path d="M1444.00 217.60 L1445.25 221.68 L1430.79 225.67 L1429.79 222.38Z" fill="hsl(342,100%,50%)"/><path d="M1444.81 220.14 L1445.92 224.27 L1431.33 227.75 L1430.44 224.43Z" fill="hsl(344,100%,50%)"/><path d="M1445.53 222.72 L1446.49 226.88 L1431.79 229.84 L1431.01 226.50Z" fill="hsl(346,100%,50%)"/><path d="M1446.16 225.31 L1446.97 229.51 L1432.17 231.96 L1431.52 228.58Z" fill="hsl(348,100%,50%)"/><path d="M1446.69 227.93 L1447.36 232.15 L1432.49 234.08 L1431.95 230.69Z" fill="hsl(350,100%,50%)"/><path d="M1447.14 230.56 L1447.66 234.80 L1432.73 236.21 L1432.31 232.80Z" fill="hsl(352,100%,50%)"/><path d="M1447.49 233.21 L1447.87 237.46 L1432.89 238.35 L1432.59 234.93Z" fill="hsl(354,100%,50%)"/><path d="M1447.75 235.86 L1447.98 240.13 L1432.98 240.50 L1432.80 237.07Z" fill="hsl(356,100%,50%)"/><path d="M1447.92 238.53 L1448.00 242.80 L1433.00 242.64 L1432.94 239.21Z" fill="hsl(358,100%,50%)"/><defs><linearGradient id="tbw" gradientUnits="userSpaceOnUse" x1="1340.75" y1="295.26" x2="1433.00" y2="242.00"><stop offset="0" stop-color="#000"/><stop offset="1" stop-color="#fff"/></linearGradient>
<linearGradient id="thue" gradientUnits="userSpaceOnUse" x1="1340.75" y1="188.74" x2="1386.88" y2="268.63"><stop offset="0" stop-color="#0000ff" stop-opacity="1"/><stop offset="1" stop-color="#0000ff" stop-opacity="0"/></linearGradient></defs>
<path d="M1340.75 188.74 L1433.00 242.00 L1340.75 295.26Z" fill="url(#tbw)"/><path d="M1340.75 188.74 L1433.00 242.00 L1340.75 295.26Z" fill="url(#thue)"/><circle cx="1336.5" cy="182.2" r="4.8" fill="none" stroke="#fff" stroke-width="1.5"/><circle cx="1349.7" cy="283.7" r="4.6" fill="none" stroke="#e8e8e8" stroke-width="1.5"/></svg><div class="t" style="left:1240.5px;top:274.34px;font-size:10px;line-height:10px;color:#d4d4d4;font-weight:normal;">H: 240</div><div class="t" style="left:1241.5px;top:287.34px;font-size:10px;line-height:10px;color:#d4d4d4;font-weight:normal;">S: 24</div><div class="t" style="left:1242.5px;top:300.34px;font-size:10px;line-height:10px;color:#d4d4d4;font-weight:normal;">L: 13</div><div class="t" style="left:1240.5px;top:317.67px;font-size:10.2px;line-height:10.2px;color:#d4d4d4;font-weight:normal;">Opacity</div><svg class="a" style="left:1232px;top:320px;" width="264" height="36" viewBox="1232 320 264 36"><circle cx="1247.2" cy="338.3" r="6.3" fill="#242424"/><defs><pattern id="chk" x="0" y="0" width="6" height="6" patternUnits="userSpaceOnUse"><rect width="6" height="6" fill="#9a9a9a"/><rect width="3" height="3" fill="#d8d8d8"/><rect x="3" y="3" width="3" height="3" fill="#d8d8d8"/></pattern><linearGradient id="opg" x1="0" x2="1"><stop offset="0" stop-color="#fff" stop-opacity=".55"/><stop offset=".5" stop-color="#888" stop-opacity=".2"/><stop offset="1" stop-color="#333" stop-opacity=".75"/></linearGradient></defs><rect x="1261" y="334" width="159" height="8" rx="4" fill="url(#chk)" stroke="#2a2a2a" stroke-width="1"/><rect x="1261" y="334" width="159" height="8" rx="4" fill="url(#opg)"/><circle cx="1415" cy="338.3" r="4.6" fill="#3a3a3a" stroke="#f0f0f0" stroke-width="1.5"/></svg><div class="a" style="left:1430px;top:328px;width:61px;height:20px;background:#383838;border:1px solid #2c2c2c;border-radius:3px"></div><div class="a" style="left:1473px;top:329px;width:1px;height:18px;background:#2c2c2c;"></div><div class="t" style="left:1433.5px;top:333.20px;font-size:10.4px;line-height:10.4px;color:#e8e8e8;font-weight:normal;">100 %</div><svg class="a" style="left:1474px;top:328px;" width="17" height="20" viewBox="1474 328 17 20"><path d="M1479.5 336 h6 l-3 4z" fill="#e8e8e8"/></svg><div class="a" style="left:1232px;top:356px;width:263px;height:1px;background:#2e2e2e;"></div><div class="a" style="left:1232px;top:357px;width:263px;height:22px;background:#2b2728;"></div><div class="a" style="left:1251px;top:359px;width:38px;height:20px;background:#404040;"></div><div class="a" style="left:1239px;top:362px;width:1px;height:11px;background:#4e4a4b;"></div><div class="a" style="left:1242px;top:362px;width:1px;height:11px;background:#4e4a4b;"></div><div class="t" style="left:1254px;top:363.54px;font-size:10px;line-height:10px;color:#f0f0f0;font-weight:bold;">Layers</div><div class="t" style="left:1294px;top:363.54px;font-size:10px;line-height:10px;color:#9a9a9a;font-weight:bold;">Effects</div><div class="a" style="left:1331px;top:363px;width:1px;height:11px;background:#4a4647;"></div><div class="t" style="left:1336px;top:363.54px;font-size:10px;line-height:10px;color:#9a9a9a;font-weight:bold;">Styles</div><div class="a" style="left:1369px;top:363px;width:1px;height:11px;background:#4a4647;"></div><div class="t" style="left:1374.5px;top:363.54px;font-size:10px;line-height:10px;color:#9a9a9a;font-weight:bold;">Text Styles</div><div class="a" style="left:1430px;top:363px;width:1px;height:11px;background:#4a4647;"></div><div class="t" style="left:1435px;top:363.54px;font-size:10px;line-height:10px;color:#9a9a9a;font-weight:bold;">Stock</div><div class="a" style="left:1232px;top:379px;width:263px;height:29px;background:#404040;"></div><div class="t" style="left:1237px;top:389.03px;font-size:10.6px;line-height:10.6px;color:#d4d4d4;font-weight:normal;">Opacity:</div><div class="a" style="left:1292px;top:384px;width:49px;height:20px;background:#383838;border:1px solid #2a2a2a;border-radius:3px"></div><div class="t" style="left:1295.5px;top:389.86px;font-size:10.8px;line-height:10.8px;color:#ececec;font-weight:normal;">100 %</div><div class="a" style="left:1343px;top:384px;width:108px;height:20px;background:#383838;border:1px solid #2a2a2a;border-radius:3px"></div><div class="t" style="left:1348px;top:389.86px;font-size:10.8px;line-height:10.8px;color:#ececec;font-weight:normal;">Passthrough</div><svg class="a" style="left:1232px;top:357px;" width="264" height="51" viewBox="1232 357 264 51"><rect x="1480" y="363.70" width="8.2" height="1.1" fill="#f0f0f0"/><rect x="1480" y="365.75" width="8.2" height="1.1" fill="#f0f0f0"/><rect x="1480" y="367.80" width="8.2" height="1.1" fill="#f0f0f0"/><rect x="1480" y="369.85" width="8.2" height="1.1" fill="#f0f0f0"/><path d="M1489.6 370.6 h4.2 l-2.1 2.6z" fill="#f0f0f0"/><path d="M1329.5 392.5 h6.5 l-3.25 4.2z" fill="#e8e8e8"/><path d="M1441.5 392 l2 -2.5 l2 2.5z M1441.5 396 l2 2.5 l2 -2.5z" fill="#d8d8d8"/><rect x="-1.6" y="-7" width="3.2" height="4" transform="translate(1462,394) rotate(0)" fill="#9a9a9a"/><rect x="-1.6" y="-7" width="3.2" height="4" transform="translate(1462,394) rotate(45)" fill="#9a9a9a"/><rect x="-1.6" y="-7" width="3.2" height="4" transform="translate(1462,394) rotate(90)" fill="#9a9a9a"/><rect x="-1.6" y="-7" width="3.2" height="4" transform="translate(1462,394) rotate(135)" fill="#9a9a9a"/><rect x="-1.6" y="-7" width="3.2" height="4" transform="translate(1462,394) rotate(180)" fill="#9a9a9a"/><rect x="-1.6" y="-7" width="3.2" height="4" transform="translate(1462,394) rotate(225)" fill="#9a9a9a"/><rect x="-1.6" y="-7" width="3.2" height="4" transform="translate(1462,394) rotate(270)" fill="#9a9a9a"/><rect x="-1.6" y="-7" width="3.2" height="4" transform="translate(1462,394) rotate(315)" fill="#9a9a9a"/><circle cx="1462" cy="394" r="4.6" fill="#9a9a9a"/><circle cx="1462" cy="394" r="1.8" fill="#404040"/><path d="M1479 393 v-3 a3 3 0 0 1 6 0 v3" fill="none" stroke="#8a8a8a" stroke-width="1.5"/><rect x="1477.5" y="393" width="9" height="7.5" rx="1" fill="#8a8a8a"/></svg><div class="a" style="left:1232px;top:408px;width:263px;height:1px;background:#2a2a2a;"></div><div class="a" style="left:1232px;top:409px;width:249px;height:259px;background:#3a3a3a;"></div><div class="a" style="left:1481px;top:409px;width:14px;height:259px;background:#373737;"></div><div class="a" style="left:1485px;top:441px;width:8px;height:28px;background:#474747;border-radius:4px"></div><div class="a" style="left:1232px;top:409px;width:249px;height:15px;background:#42699a;"></div><div class="a" style="left:1315px;top:422px;width:156px;height:2px;background:#3b8fe0;"></div><div class="a" style="left:1232px;top:409px;width:249px;height:15px;overflow:hidden"><svg class="a" style="left:0;top:-9px;overflow:hidden" width="249" height="24" viewBox="1232 400 249 24"><rect x="1283.5" y="400" width="29" height="22.5" fill="#2f2f2f" stroke="#111" stroke-width="1"/><circle cx="1273" cy="409" r="6" fill="#2a2a2a" stroke="#e8e8e8" stroke-width="1"/><path d="M1270 409 h6 l-3 3.5z" fill="#e8e8e8"/><rect x="1450" y="402" width="13" height="7" rx="3" fill="#2c2c2c"/></svg><div class="t" style="left:86px;top:-7.5px;font-size:11px;line-height:11px;color:#fff;font-weight:bold">Front land <span style="color:#8fa4cf;font-weight:normal">(Layer)</span></div></div><svg class="a" style="left:1232px;top:424px;" width="249" height="244" viewBox="1232 424 249 244"><rect x="1232" y="423.5" width="249" height="1" fill="#2c2c2c"/><rect x="1293.5" y="426.5" width="29" height="29" fill="#2b2b2b" stroke="#0a0a0a" stroke-width="1.4"/><path d="M1297 444.0 q6 -2 10 -4 q4 -1 8 2 q3 1 6 2" fill="none" stroke="#4a2436" stroke-width="1.4"/><rect x="1451" y="434.0" width="11.5" height="11.5" rx="2" fill="#2e2e2e" stroke="#262626" stroke-width="1"/><path d="M1453.5 439.5 l2.5 3 l4.5 -6.5" fill="none" stroke="#f4f4f4" stroke-width="1.6"/><rect x="1232" y="456.6" width="249" height="1" fill="#2c2c2c"/><rect x="1303.5" y="459.6" width="29" height="29" fill="#2b2b2b" stroke="#0a0a0a" stroke-width="1.4"/><rect x="1304" y="471.6" width="28" height="4" fill="#44222f"/><rect x="1451" y="467.1" width="11.5" height="11.5" rx="2" fill="#2e2e2e" stroke="#262626" stroke-width="1"/><path d="M1453.5 472.6 l2.5 3 l4.5 -6.5" fill="none" stroke="#f4f4f4" stroke-width="1.6"/><rect x="1232" y="489.7" width="249" height="1" fill="#2c2c2c"/><rect x="1303.5" y="492.7" width="29" height="29" fill="#2b2b2b" stroke="#0a0a0a" stroke-width="1.4"/><rect x="1304" y="509.2" width="28" height="1.5" fill="#4a2436"/><rect x="1451" y="500.2" width="11.5" height="11.5" rx="2" fill="#2e2e2e" stroke="#262626" stroke-width="1"/><path d="M1453.5 505.7 l2.5 3 l4.5 -6.5" fill="none" stroke="#f4f4f4" stroke-width="1.6"/><rect x="1232" y="522.8" width="249" height="1" fill="#2c2c2c"/><rect x="1303.5" y="525.8" width="29" height="29" fill="#2b2b2b" stroke="#0a0a0a" stroke-width="1.4"/><path d="M1307 542.3 q12 -3 22 1" fill="none" stroke="#3a2a30" stroke-width=".8"/><rect x="1451" y="533.3" width="11.5" height="11.5" rx="2" fill="#2e2e2e" stroke="#262626" stroke-width="1"/><path d="M1453.5 538.8 l2.5 3 l4.5 -6.5" fill="none" stroke="#f4f4f4" stroke-width="1.6"/><rect x="1232" y="555.9" width="249" height="1" fill="#2c2c2c"/><rect x="1303.5" y="558.9" width="29" height="29" fill="#2b2b2b" stroke="#0a0a0a" stroke-width="1.4"/><rect x="1314" y="559.4" width="2.5" height="28" fill="#4a2438"/><rect x="1451" y="566.4" width="11.5" height="11.5" rx="2" fill="#2e2e2e" stroke="#262626" stroke-width="1"/><path d="M1453.5 571.9 l2.5 3 l4.5 -6.5" fill="none" stroke="#f4f4f4" stroke-width="1.6"/><rect x="1232" y="589.0" width="249" height="1" fill="#2c2c2c"/><rect x="1303.5" y="592.0" width="29" height="29" fill="#2b2b2b" stroke="#0a0a0a" stroke-width="1.4"/><path d="M1305 610.5 q13 -8 27 0" fill="none" stroke="#4a2436" stroke-width="1.6"/><rect x="1451" y="599.5" width="11.5" height="11.5" rx="2" fill="#2e2e2e" stroke="#262626" stroke-width="1"/><path d="M1453.5 605.0 l2.5 3 l4.5 -6.5" fill="none" stroke="#f4f4f4" stroke-width="1.6"/><rect x="1232" y="622.1" width="249" height="1" fill="#2c2c2c"/><rect x="1303.5" y="625.1" width="29" height="29" fill="#2b2b2b" stroke="#0a0a0a" stroke-width="1.4"/><rect x="1314" y="625.6" width="2.5" height="28" fill="#4a2438"/><rect x="1451" y="632.6" width="11.5" height="11.5" rx="2" fill="#2e2e2e" stroke="#262626" stroke-width="1"/><path d="M1453.5 638.1 l2.5 3 l4.5 -6.5" fill="none" stroke="#f4f4f4" stroke-width="1.6"/><rect x="1232" y="655.2" width="249" height="1" fill="#2c2c2c"/><rect x="1303.5" y="658.2" width="29" height="29" fill="#2b2b2b" stroke="#0a0a0a" stroke-width="1.4"/><rect x="1314" y="658.7" width="2.5" height="28" fill="#4a2438"/><rect x="1451" y="665.7" width="11.5" height="11.5" rx="2" fill="#2e2e2e" stroke="#262626" stroke-width="1"/><path d="M1453.5 671.2 l2.5 3 l4.5 -6.5" fill="none" stroke="#f4f4f4" stroke-width="1.6"/><circle cx="1283" cy="441.5" r="7" fill="#2e2e2e"/><path d="M1279 438.5 h8 l-4 6z" fill="#cfcfcf"/></svg><div class="a" style="left:1232px;top:424px;width:249px;height:244px;overflow:hidden"><div class="t" style="left:97px;top:11.6px;font-size:10.2px;line-height:10.2px;color:#c4c4c4">(Group)</div><div class="t" style="left:106.5px;top:44.7px;font-size:10.2px;line-height:10.2px;color:#c4c4c4">(Curve)</div><div class="t" style="left:106.5px;top:77.8px;font-size:10.2px;line-height:10.2px;color:#c4c4c4">(Curve)</div><div class="t" style="left:106.5px;top:110.9px;font-size:10.2px;line-height:10.2px;color:#c4c4c4">(Curve)</div><div class="t" style="left:106.5px;top:144.0px;font-size:10.2px;line-height:10.2px;color:#c4c4c4">(Rectangle)</div><div class="t" style="left:106.5px;top:177.1px;font-size:10.2px;line-height:10.2px;color:#c4c4c4">(Curve)</div><div class="t" style="left:106.5px;top:210.2px;font-size:10.2px;line-height:10.2px;color:#c4c4c4">(Rectangle)</div><div class="t" style="left:106.5px;top:243.3px;font-size:10.2px;line-height:10.2px;color:#c4c4c4">(Rectangle)</div></div><div class="a" style="left:1232px;top:668px;width:263px;height:24px;background:#414141;"></div><div class="a" style="left:1232px;top:668px;width:263px;height:1px;background:#4a4a4a;"></div><div class="a" style="left:1236px;top:670px;width:22px;height:20px;background:#363636;border-radius:2px"></div><svg class="a" style="left:1232px;top:668px;" width="264" height="24" viewBox="1232 668 264 24"><path d="M1240 676 l7 -3.5 l7 3.5 l-7 3.5z" fill="#bdbdbd"/><path d="M1240 679.5 l7 3.5 l7 -3.5 M1240 683 l7 3.5 l7 -3.5" fill="none" stroke="#bdbdbd" stroke-width="1.4"/><rect x="1315" y="674" width="14" height="11" fill="#bdbdbd"/><circle cx="1322" cy="679.5" r="3.8" fill="#404040"/><circle cx="1345" cy="679.5" r="5.5" fill="none" stroke="#bdbdbd" stroke-width="1.2"/><path d="M1345 674 a5.5 5.5 0 0 0 0 11z" fill="#bdbdbd"/><text x="1359" y="684" font-family="Liberation Serif" font-style="italic" font-size="14" fill="#bdbdbd">fx</text><path d="M1432.5 673.5 h6 l3.5 3.5 v9 h-9.5z M1438.5 673.5 v3.5 h3.5" fill="none" stroke="#bdbdbd" stroke-width="1"/><rect x="1455.0" y="674.0" width="2.5" height="2.5" fill="#d8d8d8"/><rect x="1455.0" y="676.5" width="2.5" height="2.5" fill="#2a2a2a"/><rect x="1455.0" y="679.0" width="2.5" height="2.5" fill="#d8d8d8"/><rect x="1455.0" y="681.5" width="2.5" height="2.5" fill="#2a2a2a"/><rect x="1455.0" y="684.0" width="2.5" height="2.5" fill="#d8d8d8"/><rect x="1457.5" y="674.0" width="2.5" height="2.5" fill="#2a2a2a"/><rect x="1457.5" y="676.5" width="2.5" height="2.5" fill="#d8d8d8"/><rect x="1457.5" y="679.0" width="2.5" height="2.5" fill="#2a2a2a"/><rect x="1457.5" y="681.5" width="2.5" height="2.5" fill="#d8d8d8"/><rect x="1457.5" y="684.0" width="2.5" height="2.5" fill="#2a2a2a"/><rect x="1460.0" y="674.0" width="2.5" height="2.5" fill="#d8d8d8"/><rect x="1460.0" y="676.5" width="2.5" height="2.5" fill="#2a2a2a"/><rect x="1460.0" y="679.0" width="2.5" height="2.5" fill="#d8d8d8"/><rect x="1460.0" y="681.5" width="2.5" height="2.5" fill="#2a2a2a"/><rect x="1460.0" y="684.0" width="2.5" height="2.5" fill="#d8d8d8"/><rect x="1462.5" y="674.0" width="2.5" height="2.5" fill="#2a2a2a"/><rect x="1462.5" y="676.5" width="2.5" height="2.5" fill="#d8d8d8"/><rect x="1462.5" y="679.0" width="2.5" height="2.5" fill="#2a2a2a"/><rect x="1462.5" y="681.5" width="2.5" height="2.5" fill="#d8d8d8"/><rect x="1462.5" y="684.0" width="2.5" height="2.5" fill="#2a2a2a"/><path d="M1477.5 675.5 h10 M1480.5 675.5 v-1.5 h4 v1.5 M1478.5 676.5 v9 h8 v-9 M1481 678 v6 M1484 678 v6" fill="none" stroke="#bdbdbd" stroke-width="1"/></svg><div class="a" style="left:1232px;top:692px;width:263px;height:1px;background:#2e2e2e;"></div><div class="a" style="left:1232px;top:693px;width:263px;height:22px;background:#2b2728;"></div><div class="a" style="left:1251px;top:695px;width:55px;height:20px;background:#404040;"></div><div class="a" style="left:1239px;top:698px;width:1px;height:11px;background:#4e4a4b;"></div><div class="a" style="left:1242px;top:698px;width:1px;height:11px;background:#4e4a4b;"></div><div class="t" style="left:1254px;top:700.03px;font-size:10px;line-height:10px;color:#f0f0f0;font-weight:bold;">Transform</div><div class="t" style="left:1311px;top:700.03px;font-size:10px;line-height:10px;color:#9a9a9a;font-weight:bold;">History</div><div class="a" style="left:1350px;top:699px;width:1px;height:11px;background:#4a4647;"></div><div class="t" style="left:1354.5px;top:700.03px;font-size:10px;line-height:10px;color:#9a9a9a;font-weight:bold;">Navigator</div><div class="a" style="left:1232px;top:715px;width:263px;height:100px;background:#404040;"></div><svg class="a" style="left:1232px;top:715px;" width="264" height="100" viewBox="1232 715 264 100"><rect x="1252" y="738" width="33" height="33" fill="#5a5a5a"/><rect x="1249.4" y="735.4" width="5.2" height="5.2" fill="#8a8a8a"/><rect x="1249.4" y="751.9" width="5.2" height="5.2" fill="#8a8a8a"/><rect x="1249.4" y="768.4" width="5.2" height="5.2" fill="#8a8a8a"/><rect x="1265.9" y="735.4" width="5.2" height="5.2" fill="#8a8a8a"/><rect x="1265.9" y="751.9" width="5.2" height="5.2" fill="#8a8a8a"/><rect x="1265.9" y="768.4" width="5.2" height="5.2" fill="#8a8a8a"/><rect x="1282.4" y="735.4" width="5.2" height="5.2" fill="#8a8a8a"/><rect x="1282.4" y="751.9" width="5.2" height="5.2" fill="#8a8a8a"/><rect x="1282.4" y="768.4" width="5.2" height="5.2" fill="#8a8a8a"/><rect x="1247.5" y="733" width="9.6" height="9.6" fill="#f4f4f4"/><path d="M1476 740 v12" stroke="#777" stroke-width="1"/><ellipse cx="1476" cy="742.5" rx="2" ry="3" fill="none" stroke="#8a8a8a" stroke-width="1"/><ellipse cx="1476" cy="749.5" rx="2" ry="3" fill="none" stroke="#8a8a8a" stroke-width="1"/></svg><div class="a" style="left:1319px;top:725.5px;width:60px;height:18.5px;background:#333333;border:1px solid #262626;border-radius:3px"></div><div class="t" style="left:1306px;top:730.33px;font-size:10.6px;line-height:10.6px;color:#c8c8c8;font-weight:normal;">X:</div><div class="t" style="left:1322px;top:730.16px;font-size:10.8px;line-height:10.8px;color:#ececec;font-weight:normal;">-0.075 in</div><div class="a" style="left:1319px;top:747px;width:60px;height:18.5px;background:#333333;border:1px solid #262626;border-radius:3px"></div><div class="t" style="left:1306px;top:751.83px;font-size:10.6px;line-height:10.6px;color:#c8c8c8;font-weight:normal;">Y:</div><div class="t" style="left:1322px;top:751.66px;font-size:10.8px;line-height:10.8px;color:#ececec;font-weight:normal;">5.159 in</div><div class="a" style="left:1403px;top:725.5px;width:60px;height:18.5px;background:#333333;border:1px solid #262626;border-radius:3px"></div><div class="t" style="left:1387.5px;top:730.33px;font-size:10.6px;line-height:10.6px;color:#c8c8c8;font-weight:normal;">W:</div><div class="t" style="left:1406px;top:730.16px;font-size:10.8px;line-height:10.8px;color:#ececec;font-weight:normal;">12.48 in</div><div class="a" style="left:1403px;top:747px;width:60px;height:18.5px;background:#333333;border:1px solid #262626;border-radius:3px"></div><div class="t" style="left:1389px;top:751.83px;font-size:10.6px;line-height:10.6px;color:#c8c8c8;font-weight:normal;">H:</div><div class="t" style="left:1406px;top:751.66px;font-size:10.8px;line-height:10.8px;color:#ececec;font-weight:normal;">2.062 in</div><div class="a" style="left:1319px;top:779px;width:60px;height:19px;background:#333333;border:1px solid #262626;border-radius:3px"></div><div class="t" style="left:1306px;top:783.83px;font-size:10.6px;line-height:10.6px;color:#c8c8c8;font-weight:normal;">R:</div><div class="t" style="left:1322px;top:783.66px;font-size:10.8px;line-height:10.8px;color:#ececec;font-weight:normal;">0 °</div><svg class="a" style="left:1363px;top:779px;" width="16" height="19" viewBox="1363 779 16 19"><path d="M1368 786.5 h6 l-3 4z" fill="#e8e8e8"/></svg><div class="a" style="left:1403px;top:779px;width:60px;height:19px;background:#333333;border:1px solid #262626;border-radius:3px"></div><div class="t" style="left:1390px;top:783.83px;font-size:10.6px;line-height:10.6px;color:#c8c8c8;font-weight:normal;">S:</div><div class="t" style="left:1406px;top:783.66px;font-size:10.8px;line-height:10.8px;color:#ececec;font-weight:normal;">0 °</div><svg class="a" style="left:1447px;top:779px;" width="16" height="19" viewBox="1447 779 16 19"><path d="M1452 786.5 h6 l-3 4z" fill="#e8e8e8"/></svg><div class="t" style="left:76px;top:820px;font-size:11px;line-height:11px;color:#d4d4d4">'Front land' selected. <b style="color:#fff">Drag</b> to move selection. <b style="color:#fff">Click</b> another object to select it. <b style="color:#fff">Click</b> on an empty area to deselect selection.</div></body></html>
